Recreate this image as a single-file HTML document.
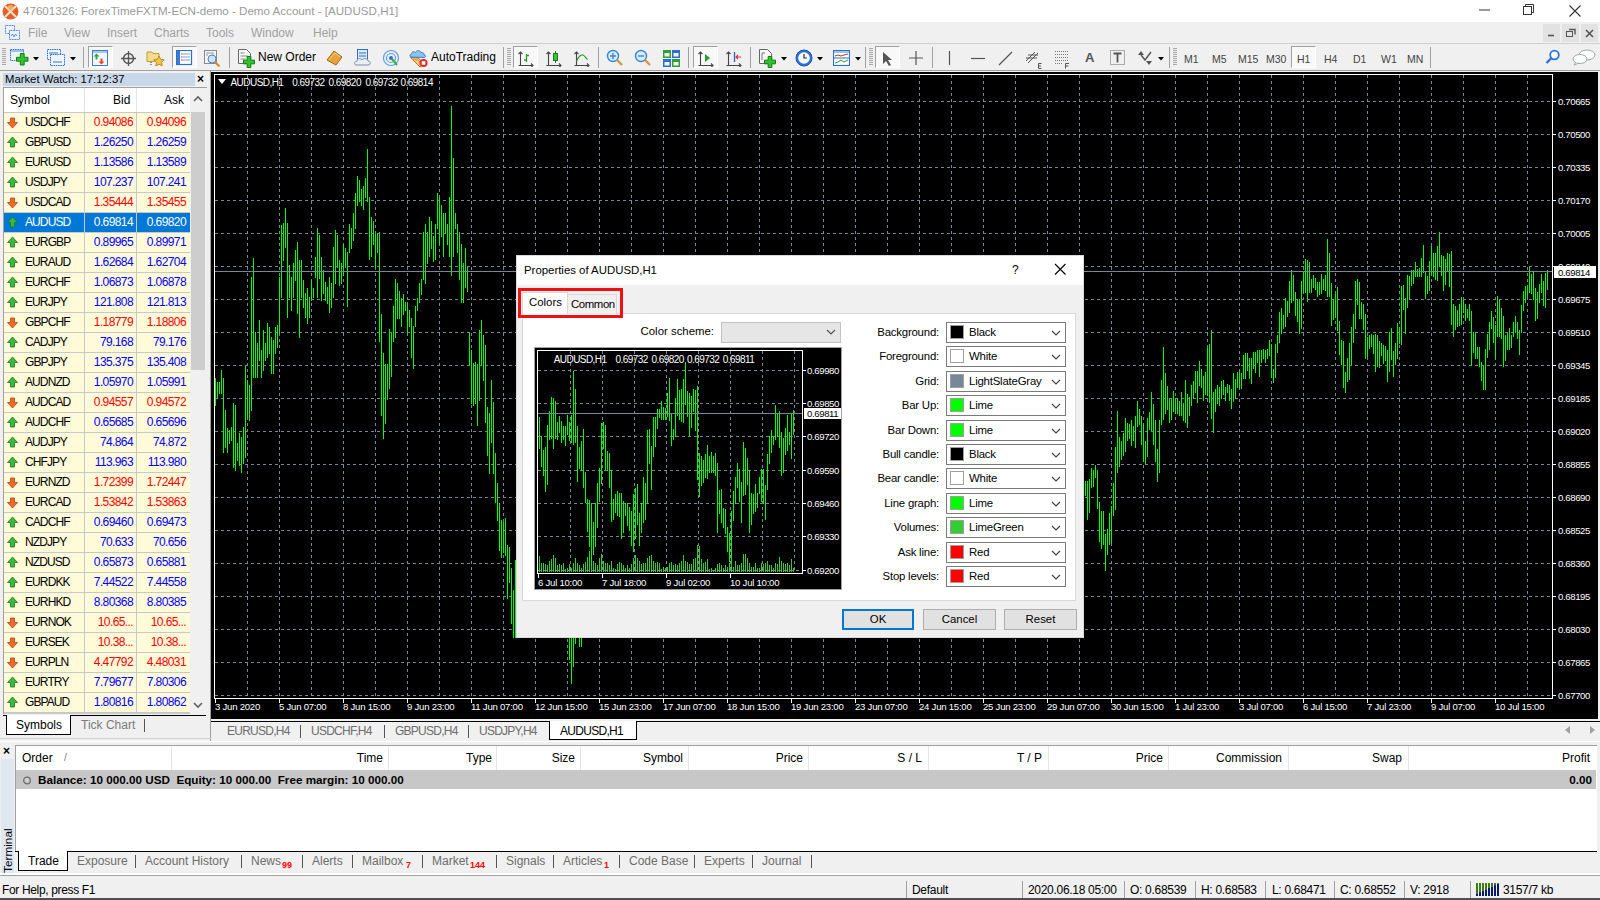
<!DOCTYPE html><html><head><meta charset='utf-8'><style>
*{margin:0;padding:0;box-sizing:border-box}
html,body{width:1600px;height:900px;overflow:hidden}
body{position:relative;background:#f0f0f0;font-family:"Liberation Sans",sans-serif;font-size:12px;color:#000}
.a{position:absolute}
.t{position:absolute;white-space:pre;line-height:1}
</style></head><body>
<div class='a' style='left:0;top:0;width:1600px;height:22px;background:#fff'></div>
<div class='t' style='left:23px;top:5px;font-size:11.6px;color:#9a9a9a'>47601326: ForexTimeFXTM-ECN-demo - Demo Account - [AUDUSD,H1]</div>
<div class='a' style='left:0;top:22px;width:1600px;height:21px;background:#f0f0f0'></div>
<div class='a' style='left:0;top:43px;width:1600px;height:1px;background:#cfcfcf'></div>
<div class='t' style='left:28px;top:27px;color:#a0a0a0'>File</div>
<div class='t' style='left:64px;top:27px;color:#a0a0a0'>View</div>
<div class='t' style='left:107px;top:27px;color:#a0a0a0'>Insert</div>
<div class='t' style='left:154px;top:27px;color:#a0a0a0'>Charts</div>
<div class='t' style='left:206px;top:27px;color:#a0a0a0'>Tools</div>
<div class='t' style='left:251px;top:27px;color:#a0a0a0'>Window</div>
<div class='t' style='left:313px;top:27px;color:#a0a0a0'>Help</div>
<div class='a' style='left:0;top:44px;width:1600px;height:26px;background:#f0f0f0'></div>
<div class='a' style='left:0;top:70px;width:1600px;height:1px;background:#a0a0a0'></div>
<div class='t' style='left:258px;top:51px'>New Order</div>
<div class='t' style='left:431px;top:51px'>AutoTrading</div>
<div class='a' style='left:0;top:71px;width:211px;height:667px;background:#f0f0f0'></div>
<div class='a' style='left:3px;top:73px;width:192px;height:13px;background:#c9d8e8'></div>
<div class='t' style='left:5px;top:74px;font-size:11.3px'>Market Watch: 17:12:37</div>
<div class='t' style='left:197px;top:73px;font-size:12px;font-weight:bold'>×</div>
<div class='a' style='left:3px;top:87px;width:204px;height:627px;background:#fff;border:1px solid #a0a0a0'></div>
<div class='a' style='left:4px;top:88px;width:186px;height:24px;background:#fff'></div>
<div class='t' style='left:10px;top:94px'>Symbol</div>
<div class='t' style='left:113px;top:94px'>Bid</div>
<div class='t' style='left:164px;top:94px'>Ask</div>
<div class='a' style='left:84px;top:88px;width:1px;height:24px;background:#e5e5e5'></div>
<div class='a' style='left:136px;top:88px;width:1px;height:24px;background:#e5e5e5'></div>
<div class='a' style='left:4px;top:112px;width:186px;height:602px;background:#c8c8c8'></div>
<div class='a' style='left:4px;top:113px;width:80px;height:19px;background:#fffad8'></div>
<div class='a' style='left:85px;top:113px;width:51px;height:19px;background:#fffad8'></div>
<div class='a' style='left:137px;top:113px;width:53px;height:19px;background:#fffad8'></div>
<svg class='a' style='left:7px;top:117px' width='12' height='12' viewBox='0 0 12 12'><path d='M3.5 1h4v4.5h3L5.5 11 .5 5.5h3z' fill='#f06a2a' stroke='#b8401a' stroke-width='.8'/></svg>
<div class='t' style='left:25px;top:116.2px;color:#000;letter-spacing:-0.9px'>USDCHF</div>
<div class='t' style='right:1467px;top:116.2px;color:#ff0000;letter-spacing:-0.6px'>0.94086</div>
<div class='t' style='right:1414px;top:116.2px;color:#ff0000;letter-spacing:-0.6px'>0.94096</div>
<div class='a' style='left:4px;top:133px;width:80px;height:19px;background:#fffad8'></div>
<div class='a' style='left:85px;top:133px;width:51px;height:19px;background:#fffad8'></div>
<div class='a' style='left:137px;top:133px;width:53px;height:19px;background:#fffad8'></div>
<svg class='a' style='left:7px;top:136px' width='12' height='12' viewBox='0 0 12 12'><path d='M5.5 1l5 5.5h-3V11h-4V6.5h-3z' fill='#3cb83c' stroke='#1c7a1c' stroke-width='.8'/></svg>
<div class='t' style='left:25px;top:136.2px;color:#000;letter-spacing:-0.9px'>GBPUSD</div>
<div class='t' style='right:1467px;top:136.2px;color:#0000ff;letter-spacing:-0.6px'>1.26250</div>
<div class='t' style='right:1414px;top:136.2px;color:#0000ff;letter-spacing:-0.6px'>1.26259</div>
<div class='a' style='left:4px;top:153px;width:80px;height:19px;background:#fffad8'></div>
<div class='a' style='left:85px;top:153px;width:51px;height:19px;background:#fffad8'></div>
<div class='a' style='left:137px;top:153px;width:53px;height:19px;background:#fffad8'></div>
<svg class='a' style='left:7px;top:156px' width='12' height='12' viewBox='0 0 12 12'><path d='M5.5 1l5 5.5h-3V11h-4V6.5h-3z' fill='#3cb83c' stroke='#1c7a1c' stroke-width='.8'/></svg>
<div class='t' style='left:25px;top:156.2px;color:#000;letter-spacing:-0.9px'>EURUSD</div>
<div class='t' style='right:1467px;top:156.2px;color:#0000ff;letter-spacing:-0.6px'>1.13586</div>
<div class='t' style='right:1414px;top:156.2px;color:#0000ff;letter-spacing:-0.6px'>1.13589</div>
<div class='a' style='left:4px;top:173px;width:80px;height:19px;background:#fffad8'></div>
<div class='a' style='left:85px;top:173px;width:51px;height:19px;background:#fffad8'></div>
<div class='a' style='left:137px;top:173px;width:53px;height:19px;background:#fffad8'></div>
<svg class='a' style='left:7px;top:176px' width='12' height='12' viewBox='0 0 12 12'><path d='M5.5 1l5 5.5h-3V11h-4V6.5h-3z' fill='#3cb83c' stroke='#1c7a1c' stroke-width='.8'/></svg>
<div class='t' style='left:25px;top:176.2px;color:#000;letter-spacing:-0.9px'>USDJPY</div>
<div class='t' style='right:1467px;top:176.2px;color:#0000ff;letter-spacing:-0.6px'>107.237</div>
<div class='t' style='right:1414px;top:176.2px;color:#0000ff;letter-spacing:-0.6px'>107.241</div>
<div class='a' style='left:4px;top:193px;width:80px;height:19px;background:#fffad8'></div>
<div class='a' style='left:85px;top:193px;width:51px;height:19px;background:#fffad8'></div>
<div class='a' style='left:137px;top:193px;width:53px;height:19px;background:#fffad8'></div>
<svg class='a' style='left:7px;top:197px' width='12' height='12' viewBox='0 0 12 12'><path d='M3.5 1h4v4.5h3L5.5 11 .5 5.5h3z' fill='#f06a2a' stroke='#b8401a' stroke-width='.8'/></svg>
<div class='t' style='left:25px;top:196.2px;color:#000;letter-spacing:-0.9px'>USDCAD</div>
<div class='t' style='right:1467px;top:196.2px;color:#ff0000;letter-spacing:-0.6px'>1.35444</div>
<div class='t' style='right:1414px;top:196.2px;color:#ff0000;letter-spacing:-0.6px'>1.35455</div>
<div class='a' style='left:4px;top:213px;width:80px;height:19px;background:#0078d7'></div>
<div class='a' style='left:85px;top:213px;width:51px;height:19px;background:#0078d7'></div>
<div class='a' style='left:137px;top:213px;width:53px;height:19px;background:#0078d7'></div>
<svg class='a' style='left:7px;top:216px' width='12' height='12' viewBox='0 0 12 12'><path d='M5.5 1l5 5.5h-3V11h-4V6.5h-3z' fill='#3cb83c' stroke='#1c7a1c' stroke-width='.8'/></svg>
<div class='t' style='left:25px;top:216.2px;color:#fff;letter-spacing:-0.9px'>AUDUSD</div>
<div class='t' style='right:1467px;top:216.2px;color:#fff;letter-spacing:-0.6px'>0.69814</div>
<div class='t' style='right:1414px;top:216.2px;color:#fff;letter-spacing:-0.6px'>0.69820</div>
<div class='a' style='left:4px;top:233px;width:80px;height:19px;background:#fffad8'></div>
<div class='a' style='left:85px;top:233px;width:51px;height:19px;background:#fffad8'></div>
<div class='a' style='left:137px;top:233px;width:53px;height:19px;background:#fffad8'></div>
<svg class='a' style='left:7px;top:236px' width='12' height='12' viewBox='0 0 12 12'><path d='M5.5 1l5 5.5h-3V11h-4V6.5h-3z' fill='#3cb83c' stroke='#1c7a1c' stroke-width='.8'/></svg>
<div class='t' style='left:25px;top:236.2px;color:#000;letter-spacing:-0.9px'>EURGBP</div>
<div class='t' style='right:1467px;top:236.2px;color:#0000ff;letter-spacing:-0.6px'>0.89965</div>
<div class='t' style='right:1414px;top:236.2px;color:#0000ff;letter-spacing:-0.6px'>0.89971</div>
<div class='a' style='left:4px;top:253px;width:80px;height:19px;background:#fffad8'></div>
<div class='a' style='left:85px;top:253px;width:51px;height:19px;background:#fffad8'></div>
<div class='a' style='left:137px;top:253px;width:53px;height:19px;background:#fffad8'></div>
<svg class='a' style='left:7px;top:256px' width='12' height='12' viewBox='0 0 12 12'><path d='M5.5 1l5 5.5h-3V11h-4V6.5h-3z' fill='#3cb83c' stroke='#1c7a1c' stroke-width='.8'/></svg>
<div class='t' style='left:25px;top:256.2px;color:#000;letter-spacing:-0.9px'>EURAUD</div>
<div class='t' style='right:1467px;top:256.2px;color:#0000ff;letter-spacing:-0.6px'>1.62684</div>
<div class='t' style='right:1414px;top:256.2px;color:#0000ff;letter-spacing:-0.6px'>1.62704</div>
<div class='a' style='left:4px;top:273px;width:80px;height:19px;background:#fffad8'></div>
<div class='a' style='left:85px;top:273px;width:51px;height:19px;background:#fffad8'></div>
<div class='a' style='left:137px;top:273px;width:53px;height:19px;background:#fffad8'></div>
<svg class='a' style='left:7px;top:276px' width='12' height='12' viewBox='0 0 12 12'><path d='M5.5 1l5 5.5h-3V11h-4V6.5h-3z' fill='#3cb83c' stroke='#1c7a1c' stroke-width='.8'/></svg>
<div class='t' style='left:25px;top:276.2px;color:#000;letter-spacing:-0.9px'>EURCHF</div>
<div class='t' style='right:1467px;top:276.2px;color:#0000ff;letter-spacing:-0.6px'>1.06873</div>
<div class='t' style='right:1414px;top:276.2px;color:#0000ff;letter-spacing:-0.6px'>1.06878</div>
<div class='a' style='left:4px;top:293px;width:80px;height:19px;background:#fffad8'></div>
<div class='a' style='left:85px;top:293px;width:51px;height:19px;background:#fffad8'></div>
<div class='a' style='left:137px;top:293px;width:53px;height:19px;background:#fffad8'></div>
<svg class='a' style='left:7px;top:296px' width='12' height='12' viewBox='0 0 12 12'><path d='M5.5 1l5 5.5h-3V11h-4V6.5h-3z' fill='#3cb83c' stroke='#1c7a1c' stroke-width='.8'/></svg>
<div class='t' style='left:25px;top:296.2px;color:#000;letter-spacing:-0.9px'>EURJPY</div>
<div class='t' style='right:1467px;top:296.2px;color:#0000ff;letter-spacing:-0.6px'>121.808</div>
<div class='t' style='right:1414px;top:296.2px;color:#0000ff;letter-spacing:-0.6px'>121.813</div>
<div class='a' style='left:4px;top:313px;width:80px;height:19px;background:#fffad8'></div>
<div class='a' style='left:85px;top:313px;width:51px;height:19px;background:#fffad8'></div>
<div class='a' style='left:137px;top:313px;width:53px;height:19px;background:#fffad8'></div>
<svg class='a' style='left:7px;top:317px' width='12' height='12' viewBox='0 0 12 12'><path d='M3.5 1h4v4.5h3L5.5 11 .5 5.5h3z' fill='#f06a2a' stroke='#b8401a' stroke-width='.8'/></svg>
<div class='t' style='left:25px;top:316.2px;color:#000;letter-spacing:-0.9px'>GBPCHF</div>
<div class='t' style='right:1467px;top:316.2px;color:#ff0000;letter-spacing:-0.6px'>1.18779</div>
<div class='t' style='right:1414px;top:316.2px;color:#ff0000;letter-spacing:-0.6px'>1.18806</div>
<div class='a' style='left:4px;top:333px;width:80px;height:19px;background:#fffad8'></div>
<div class='a' style='left:85px;top:333px;width:51px;height:19px;background:#fffad8'></div>
<div class='a' style='left:137px;top:333px;width:53px;height:19px;background:#fffad8'></div>
<svg class='a' style='left:7px;top:336px' width='12' height='12' viewBox='0 0 12 12'><path d='M5.5 1l5 5.5h-3V11h-4V6.5h-3z' fill='#3cb83c' stroke='#1c7a1c' stroke-width='.8'/></svg>
<div class='t' style='left:25px;top:336.2px;color:#000;letter-spacing:-0.9px'>CADJPY</div>
<div class='t' style='right:1467px;top:336.2px;color:#0000ff;letter-spacing:-0.6px'>79.168</div>
<div class='t' style='right:1414px;top:336.2px;color:#0000ff;letter-spacing:-0.6px'>79.176</div>
<div class='a' style='left:4px;top:353px;width:80px;height:19px;background:#fffad8'></div>
<div class='a' style='left:85px;top:353px;width:51px;height:19px;background:#fffad8'></div>
<div class='a' style='left:137px;top:353px;width:53px;height:19px;background:#fffad8'></div>
<svg class='a' style='left:7px;top:356px' width='12' height='12' viewBox='0 0 12 12'><path d='M5.5 1l5 5.5h-3V11h-4V6.5h-3z' fill='#3cb83c' stroke='#1c7a1c' stroke-width='.8'/></svg>
<div class='t' style='left:25px;top:356.2px;color:#000;letter-spacing:-0.9px'>GBPJPY</div>
<div class='t' style='right:1467px;top:356.2px;color:#0000ff;letter-spacing:-0.6px'>135.375</div>
<div class='t' style='right:1414px;top:356.2px;color:#0000ff;letter-spacing:-0.6px'>135.408</div>
<div class='a' style='left:4px;top:373px;width:80px;height:19px;background:#fffad8'></div>
<div class='a' style='left:85px;top:373px;width:51px;height:19px;background:#fffad8'></div>
<div class='a' style='left:137px;top:373px;width:53px;height:19px;background:#fffad8'></div>
<svg class='a' style='left:7px;top:376px' width='12' height='12' viewBox='0 0 12 12'><path d='M5.5 1l5 5.5h-3V11h-4V6.5h-3z' fill='#3cb83c' stroke='#1c7a1c' stroke-width='.8'/></svg>
<div class='t' style='left:25px;top:376.2px;color:#000;letter-spacing:-0.9px'>AUDNZD</div>
<div class='t' style='right:1467px;top:376.2px;color:#0000ff;letter-spacing:-0.6px'>1.05970</div>
<div class='t' style='right:1414px;top:376.2px;color:#0000ff;letter-spacing:-0.6px'>1.05991</div>
<div class='a' style='left:4px;top:393px;width:80px;height:19px;background:#fffad8'></div>
<div class='a' style='left:85px;top:393px;width:51px;height:19px;background:#fffad8'></div>
<div class='a' style='left:137px;top:393px;width:53px;height:19px;background:#fffad8'></div>
<svg class='a' style='left:7px;top:397px' width='12' height='12' viewBox='0 0 12 12'><path d='M3.5 1h4v4.5h3L5.5 11 .5 5.5h3z' fill='#f06a2a' stroke='#b8401a' stroke-width='.8'/></svg>
<div class='t' style='left:25px;top:396.2px;color:#000;letter-spacing:-0.9px'>AUDCAD</div>
<div class='t' style='right:1467px;top:396.2px;color:#ff0000;letter-spacing:-0.6px'>0.94557</div>
<div class='t' style='right:1414px;top:396.2px;color:#ff0000;letter-spacing:-0.6px'>0.94572</div>
<div class='a' style='left:4px;top:413px;width:80px;height:19px;background:#fffad8'></div>
<div class='a' style='left:85px;top:413px;width:51px;height:19px;background:#fffad8'></div>
<div class='a' style='left:137px;top:413px;width:53px;height:19px;background:#fffad8'></div>
<svg class='a' style='left:7px;top:416px' width='12' height='12' viewBox='0 0 12 12'><path d='M5.5 1l5 5.5h-3V11h-4V6.5h-3z' fill='#3cb83c' stroke='#1c7a1c' stroke-width='.8'/></svg>
<div class='t' style='left:25px;top:416.2px;color:#000;letter-spacing:-0.9px'>AUDCHF</div>
<div class='t' style='right:1467px;top:416.2px;color:#0000ff;letter-spacing:-0.6px'>0.65685</div>
<div class='t' style='right:1414px;top:416.2px;color:#0000ff;letter-spacing:-0.6px'>0.65696</div>
<div class='a' style='left:4px;top:433px;width:80px;height:19px;background:#fffad8'></div>
<div class='a' style='left:85px;top:433px;width:51px;height:19px;background:#fffad8'></div>
<div class='a' style='left:137px;top:433px;width:53px;height:19px;background:#fffad8'></div>
<svg class='a' style='left:7px;top:436px' width='12' height='12' viewBox='0 0 12 12'><path d='M5.5 1l5 5.5h-3V11h-4V6.5h-3z' fill='#3cb83c' stroke='#1c7a1c' stroke-width='.8'/></svg>
<div class='t' style='left:25px;top:436.2px;color:#000;letter-spacing:-0.9px'>AUDJPY</div>
<div class='t' style='right:1467px;top:436.2px;color:#0000ff;letter-spacing:-0.6px'>74.864</div>
<div class='t' style='right:1414px;top:436.2px;color:#0000ff;letter-spacing:-0.6px'>74.872</div>
<div class='a' style='left:4px;top:453px;width:80px;height:19px;background:#fffad8'></div>
<div class='a' style='left:85px;top:453px;width:51px;height:19px;background:#fffad8'></div>
<div class='a' style='left:137px;top:453px;width:53px;height:19px;background:#fffad8'></div>
<svg class='a' style='left:7px;top:456px' width='12' height='12' viewBox='0 0 12 12'><path d='M5.5 1l5 5.5h-3V11h-4V6.5h-3z' fill='#3cb83c' stroke='#1c7a1c' stroke-width='.8'/></svg>
<div class='t' style='left:25px;top:456.2px;color:#000;letter-spacing:-0.9px'>CHFJPY</div>
<div class='t' style='right:1467px;top:456.2px;color:#0000ff;letter-spacing:-0.6px'>113.963</div>
<div class='t' style='right:1414px;top:456.2px;color:#0000ff;letter-spacing:-0.6px'>113.980</div>
<div class='a' style='left:4px;top:473px;width:80px;height:19px;background:#fffad8'></div>
<div class='a' style='left:85px;top:473px;width:51px;height:19px;background:#fffad8'></div>
<div class='a' style='left:137px;top:473px;width:53px;height:19px;background:#fffad8'></div>
<svg class='a' style='left:7px;top:477px' width='12' height='12' viewBox='0 0 12 12'><path d='M3.5 1h4v4.5h3L5.5 11 .5 5.5h3z' fill='#f06a2a' stroke='#b8401a' stroke-width='.8'/></svg>
<div class='t' style='left:25px;top:476.2px;color:#000;letter-spacing:-0.9px'>EURNZD</div>
<div class='t' style='right:1467px;top:476.2px;color:#ff0000;letter-spacing:-0.6px'>1.72399</div>
<div class='t' style='right:1414px;top:476.2px;color:#ff0000;letter-spacing:-0.6px'>1.72447</div>
<div class='a' style='left:4px;top:493px;width:80px;height:19px;background:#fffad8'></div>
<div class='a' style='left:85px;top:493px;width:51px;height:19px;background:#fffad8'></div>
<div class='a' style='left:137px;top:493px;width:53px;height:19px;background:#fffad8'></div>
<svg class='a' style='left:7px;top:497px' width='12' height='12' viewBox='0 0 12 12'><path d='M3.5 1h4v4.5h3L5.5 11 .5 5.5h3z' fill='#f06a2a' stroke='#b8401a' stroke-width='.8'/></svg>
<div class='t' style='left:25px;top:496.2px;color:#000;letter-spacing:-0.9px'>EURCAD</div>
<div class='t' style='right:1467px;top:496.2px;color:#ff0000;letter-spacing:-0.6px'>1.53842</div>
<div class='t' style='right:1414px;top:496.2px;color:#ff0000;letter-spacing:-0.6px'>1.53863</div>
<div class='a' style='left:4px;top:513px;width:80px;height:19px;background:#fffad8'></div>
<div class='a' style='left:85px;top:513px;width:51px;height:19px;background:#fffad8'></div>
<div class='a' style='left:137px;top:513px;width:53px;height:19px;background:#fffad8'></div>
<svg class='a' style='left:7px;top:516px' width='12' height='12' viewBox='0 0 12 12'><path d='M5.5 1l5 5.5h-3V11h-4V6.5h-3z' fill='#3cb83c' stroke='#1c7a1c' stroke-width='.8'/></svg>
<div class='t' style='left:25px;top:516.2px;color:#000;letter-spacing:-0.9px'>CADCHF</div>
<div class='t' style='right:1467px;top:516.2px;color:#0000ff;letter-spacing:-0.6px'>0.69460</div>
<div class='t' style='right:1414px;top:516.2px;color:#0000ff;letter-spacing:-0.6px'>0.69473</div>
<div class='a' style='left:4px;top:533px;width:80px;height:19px;background:#fffad8'></div>
<div class='a' style='left:85px;top:533px;width:51px;height:19px;background:#fffad8'></div>
<div class='a' style='left:137px;top:533px;width:53px;height:19px;background:#fffad8'></div>
<svg class='a' style='left:7px;top:536px' width='12' height='12' viewBox='0 0 12 12'><path d='M5.5 1l5 5.5h-3V11h-4V6.5h-3z' fill='#3cb83c' stroke='#1c7a1c' stroke-width='.8'/></svg>
<div class='t' style='left:25px;top:536.2px;color:#000;letter-spacing:-0.9px'>NZDJPY</div>
<div class='t' style='right:1467px;top:536.2px;color:#0000ff;letter-spacing:-0.6px'>70.633</div>
<div class='t' style='right:1414px;top:536.2px;color:#0000ff;letter-spacing:-0.6px'>70.656</div>
<div class='a' style='left:4px;top:553px;width:80px;height:19px;background:#fffad8'></div>
<div class='a' style='left:85px;top:553px;width:51px;height:19px;background:#fffad8'></div>
<div class='a' style='left:137px;top:553px;width:53px;height:19px;background:#fffad8'></div>
<svg class='a' style='left:7px;top:556px' width='12' height='12' viewBox='0 0 12 12'><path d='M5.5 1l5 5.5h-3V11h-4V6.5h-3z' fill='#3cb83c' stroke='#1c7a1c' stroke-width='.8'/></svg>
<div class='t' style='left:25px;top:556.2px;color:#000;letter-spacing:-0.9px'>NZDUSD</div>
<div class='t' style='right:1467px;top:556.2px;color:#0000ff;letter-spacing:-0.6px'>0.65873</div>
<div class='t' style='right:1414px;top:556.2px;color:#0000ff;letter-spacing:-0.6px'>0.65881</div>
<div class='a' style='left:4px;top:573px;width:80px;height:19px;background:#fffad8'></div>
<div class='a' style='left:85px;top:573px;width:51px;height:19px;background:#fffad8'></div>
<div class='a' style='left:137px;top:573px;width:53px;height:19px;background:#fffad8'></div>
<svg class='a' style='left:7px;top:576px' width='12' height='12' viewBox='0 0 12 12'><path d='M5.5 1l5 5.5h-3V11h-4V6.5h-3z' fill='#3cb83c' stroke='#1c7a1c' stroke-width='.8'/></svg>
<div class='t' style='left:25px;top:576.2px;color:#000;letter-spacing:-0.9px'>EURDKK</div>
<div class='t' style='right:1467px;top:576.2px;color:#0000ff;letter-spacing:-0.6px'>7.44522</div>
<div class='t' style='right:1414px;top:576.2px;color:#0000ff;letter-spacing:-0.6px'>7.44558</div>
<div class='a' style='left:4px;top:593px;width:80px;height:19px;background:#fffad8'></div>
<div class='a' style='left:85px;top:593px;width:51px;height:19px;background:#fffad8'></div>
<div class='a' style='left:137px;top:593px;width:53px;height:19px;background:#fffad8'></div>
<svg class='a' style='left:7px;top:596px' width='12' height='12' viewBox='0 0 12 12'><path d='M5.5 1l5 5.5h-3V11h-4V6.5h-3z' fill='#3cb83c' stroke='#1c7a1c' stroke-width='.8'/></svg>
<div class='t' style='left:25px;top:596.2px;color:#000;letter-spacing:-0.9px'>EURHKD</div>
<div class='t' style='right:1467px;top:596.2px;color:#0000ff;letter-spacing:-0.6px'>8.80368</div>
<div class='t' style='right:1414px;top:596.2px;color:#0000ff;letter-spacing:-0.6px'>8.80385</div>
<div class='a' style='left:4px;top:613px;width:80px;height:19px;background:#fffad8'></div>
<div class='a' style='left:85px;top:613px;width:51px;height:19px;background:#fffad8'></div>
<div class='a' style='left:137px;top:613px;width:53px;height:19px;background:#fffad8'></div>
<svg class='a' style='left:7px;top:617px' width='12' height='12' viewBox='0 0 12 12'><path d='M3.5 1h4v4.5h3L5.5 11 .5 5.5h3z' fill='#f06a2a' stroke='#b8401a' stroke-width='.8'/></svg>
<div class='t' style='left:25px;top:616.2px;color:#000;letter-spacing:-0.9px'>EURNOK</div>
<div class='t' style='right:1467px;top:616.2px;color:#ff0000;letter-spacing:-0.6px'>10.65...</div>
<div class='t' style='right:1414px;top:616.2px;color:#ff0000;letter-spacing:-0.6px'>10.65...</div>
<div class='a' style='left:4px;top:633px;width:80px;height:19px;background:#fffad8'></div>
<div class='a' style='left:85px;top:633px;width:51px;height:19px;background:#fffad8'></div>
<div class='a' style='left:137px;top:633px;width:53px;height:19px;background:#fffad8'></div>
<svg class='a' style='left:7px;top:637px' width='12' height='12' viewBox='0 0 12 12'><path d='M3.5 1h4v4.5h3L5.5 11 .5 5.5h3z' fill='#f06a2a' stroke='#b8401a' stroke-width='.8'/></svg>
<div class='t' style='left:25px;top:636.2px;color:#000;letter-spacing:-0.9px'>EURSEK</div>
<div class='t' style='right:1467px;top:636.2px;color:#ff0000;letter-spacing:-0.6px'>10.38...</div>
<div class='t' style='right:1414px;top:636.2px;color:#ff0000;letter-spacing:-0.6px'>10.38...</div>
<div class='a' style='left:4px;top:653px;width:80px;height:19px;background:#fffad8'></div>
<div class='a' style='left:85px;top:653px;width:51px;height:19px;background:#fffad8'></div>
<div class='a' style='left:137px;top:653px;width:53px;height:19px;background:#fffad8'></div>
<svg class='a' style='left:7px;top:657px' width='12' height='12' viewBox='0 0 12 12'><path d='M3.5 1h4v4.5h3L5.5 11 .5 5.5h3z' fill='#f06a2a' stroke='#b8401a' stroke-width='.8'/></svg>
<div class='t' style='left:25px;top:656.2px;color:#000;letter-spacing:-0.9px'>EURPLN</div>
<div class='t' style='right:1467px;top:656.2px;color:#ff0000;letter-spacing:-0.6px'>4.47792</div>
<div class='t' style='right:1414px;top:656.2px;color:#ff0000;letter-spacing:-0.6px'>4.48031</div>
<div class='a' style='left:4px;top:673px;width:80px;height:19px;background:#fffad8'></div>
<div class='a' style='left:85px;top:673px;width:51px;height:19px;background:#fffad8'></div>
<div class='a' style='left:137px;top:673px;width:53px;height:19px;background:#fffad8'></div>
<svg class='a' style='left:7px;top:676px' width='12' height='12' viewBox='0 0 12 12'><path d='M5.5 1l5 5.5h-3V11h-4V6.5h-3z' fill='#3cb83c' stroke='#1c7a1c' stroke-width='.8'/></svg>
<div class='t' style='left:25px;top:676.2px;color:#000;letter-spacing:-0.9px'>EURTRY</div>
<div class='t' style='right:1467px;top:676.2px;color:#0000ff;letter-spacing:-0.6px'>7.79677</div>
<div class='t' style='right:1414px;top:676.2px;color:#0000ff;letter-spacing:-0.6px'>7.80306</div>
<div class='a' style='left:4px;top:693px;width:80px;height:19px;background:#fffad8'></div>
<div class='a' style='left:85px;top:693px;width:51px;height:19px;background:#fffad8'></div>
<div class='a' style='left:137px;top:693px;width:53px;height:19px;background:#fffad8'></div>
<svg class='a' style='left:7px;top:696px' width='12' height='12' viewBox='0 0 12 12'><path d='M5.5 1l5 5.5h-3V11h-4V6.5h-3z' fill='#3cb83c' stroke='#1c7a1c' stroke-width='.8'/></svg>
<div class='t' style='left:25px;top:696.2px;color:#000;letter-spacing:-0.9px'>GBPAUD</div>
<div class='t' style='right:1467px;top:696.2px;color:#0000ff;letter-spacing:-0.6px'>1.80816</div>
<div class='t' style='right:1414px;top:696.2px;color:#0000ff;letter-spacing:-0.6px'>1.80862</div>
<div class='a' style='left:190px;top:88px;width:17px;height:626px;background:#f0f0f0'></div>
<div class='a' style='left:191px;top:112px;width:14px;height:258px;background:#cdcdcd'></div>
<svg class='a' style='left:192px;top:94px' width='12' height='10'><path d='M2 7l4-4 4 4' fill='none' stroke='#606060' stroke-width='1.6'/></svg>
<svg class='a' style='left:192px;top:700px' width='12' height='10'><path d='M2 3l4 4 4-4' fill='none' stroke='#606060' stroke-width='1.6'/></svg>
<div class='a' style='left:3px;top:715px;width:203px;height:1px;background:#000'></div>
<div class='a' style='left:6px;top:715px;width:65px;height:20px;background:#fff;border:1px solid #000;border-top:none'></div>
<div class='t' style='left:16px;top:719px'>Symbols</div>
<div class='t' style='left:81px;top:719px;color:#7a7a7a'>Tick Chart</div>
<div class='a' style='left:144px;top:719px;width:1px;height:13px;background:#555'></div>
<svg class='a' style='left:211px;top:72px' width='1387' height='647' viewBox='211 72 1387 647' shape-rendering='crispEdges'>
<rect x='211' y='72' width='1387' height='647' fill='#000'/>
<path d='M247.5 75V698M279.5 75V698M311.5 75V698M343.5 75V698M375.5 75V698M407.5 75V698M439.5 75V698M471.5 75V698M503.5 75V698M535.5 75V698M567.5 75V698M599.5 75V698M631.5 75V698M663.5 75V698M695.5 75V698M727.5 75V698M759.5 75V698M791.5 75V698M823.5 75V698M855.5 75V698M887.5 75V698M919.5 75V698M951.5 75V698M983.5 75V698M1015.5 75V698M1047.5 75V698M1079.5 75V698M1111.5 75V698M1143.5 75V698M1175.5 75V698M1207.5 75V698M1239.5 75V698M1271.5 75V698M1303.5 75V698M1335.5 75V698M1367.5 75V698M1399.5 75V698M1431.5 75V698M1463.5 75V698M1495.5 75V698M1527.5 75V698M215 101.5H1552M215 134.5H1552M215 167.5H1552M215 200.5H1552M215 233.5H1552M215 266.5H1552M215 299.5H1552M215 332.5H1552M215 365.5H1552M215 398.5H1552M215 431.5H1552M215 464.5H1552M215 497.5H1552M215 530.5H1552M215 563.5H1552M215 596.5H1552M215 629.5H1552M215 662.5H1552M215 695.5H1552' stroke='#778899' stroke-dasharray='3 3' fill='none'/>
<path d='M215.5 378V406M217.5 382V398M219.5 382V394M221.5 370V394M223.5 378V453M225.5 410V448M227.5 428V453M229.5 430V444M231.5 427V441M233.5 403V468M235.5 405V471M237.5 443V461M239.5 433V466M241.5 437V473M243.5 427V464M245.5 365V458M247.5 380V419M249.5 385V421M251.5 277V411M253.5 258V378M255.5 332V378M257.5 343V378M259.5 320V361M261.5 350V378M263.5 330V371M265.5 343V361M267.5 323V358M269.5 327V354M271.5 337V374M273.5 340V374M275.5 327V354M277.5 325V348M279.5 277V334M281.5 225V298M283.5 223V261M285.5 208V248M287.5 223V318M289.5 265V298M291.5 277V311M293.5 263V298M295.5 250V281M297.5 242V314M299.5 260V338M301.5 260V298M303.5 280V308M305.5 293V318M307.5 288V324M309.5 297V318M311.5 280V301M313.5 288V298M315.5 257V278M317.5 228V298M319.5 235V279M321.5 257V301M323.5 270V294M325.5 282V301M327.5 287V304M329.5 277V313M331.5 283V308M333.5 247V298M335.5 230V284M337.5 235V268M339.5 260V286M341.5 263V284M343.5 244V276M345.5 248V268M347.5 252V307M349.5 224V253M351.5 228V249M353.5 213V241M355.5 193V229M357.5 176V206M359.5 180V202M361.5 189V206M363.5 186V210M365.5 178V198M367.5 149V202M369.5 197V260M371.5 217V257M373.5 221V245M375.5 234V268M377.5 234V253M379.5 232V342M381.5 314V416M383.5 353V439M385.5 364V424M387.5 364V400M389.5 329V389M391.5 333V377M393.5 306V342M395.5 279V338M397.5 283V319M399.5 291V319M401.5 298V327M403.5 294V315M405.5 302V311M407.5 302V334M409.5 310V327M411.5 318V358M413.5 326V369M415.5 306V327M417.5 298V311M419.5 283V303M421.5 279V295M423.5 232V280M425.5 224V284M427.5 232V264M429.5 217V257M431.5 221V249M433.5 236V262M435.5 224V260M437.5 193V229M439.5 197V245M441.5 205V237M443.5 213V257M445.5 213V233M447.5 224V245M449.5 197V257M451.5 106V276M453.5 158V257M455.5 213V229M457.5 224V253M459.5 232V280M461.5 244V303M463.5 263V303M465.5 248V288M467.5 267V292M469.5 333V365M471.5 350V404M473.5 363V406M475.5 362V404M477.5 364V426M479.5 330V401M481.5 320V366M483.5 335V381M485.5 345V423M487.5 407V456M489.5 413V474M491.5 380V443M493.5 402V474M495.5 453V503M497.5 483V521M499.5 503V551M501.5 520V558M503.5 522V553M505.5 518V556M507.5 545V599M509.5 547V583M511.5 568V624M513.5 590V638M515.5 560V638M1085.5 481V496M1087.5 481V520M1089.5 479V513M1091.5 468V488M1093.5 470V487M1095.5 465V478M1097.5 470V509M1099.5 502V542M1101.5 511V549M1103.5 511V545M1105.5 534V571M1107.5 529V555M1109.5 513V545M1111.5 506V543M1113.5 483V516M1115.5 447V510M1117.5 411V473M1119.5 437V467M1121.5 441V460M1123.5 433V456M1125.5 418V452M1127.5 423V441M1129.5 424V439M1131.5 420V446M1133.5 426V441M1135.5 416V448M1137.5 401V427M1139.5 409V425M1141.5 416V445M1143.5 424V462M1145.5 441V464M1147.5 418V457M1149.5 412V430M1151.5 392V431M1153.5 404V445M1155.5 420V462M1157.5 449V482M1159.5 420V473M1161.5 380V425M1163.5 347V420M1165.5 373V414M1167.5 386V410M1169.5 398V423M1171.5 399V420M1173.5 391V412M1175.5 398V414M1177.5 398V414M1179.5 401V416M1181.5 392V416M1183.5 403V421M1185.5 380V423M1187.5 394V428M1189.5 397V416M1191.5 385V406M1193.5 381V398M1195.5 371V393M1197.5 371V403M1199.5 361V386M1201.5 369V388M1203.5 376V401M1205.5 372V395M1207.5 348V396M1209.5 344V403M1211.5 330V419M1213.5 392V433M1215.5 389V412M1217.5 385V404M1219.5 387V406M1221.5 381V399M1223.5 380V395M1225.5 387V401M1227.5 384V393M1229.5 385V401M1231.5 389V409M1233.5 373V402M1235.5 379V399M1237.5 372V388M1239.5 372V389M1241.5 373V389M1243.5 355V379M1245.5 353V379M1247.5 353V371M1249.5 358V379M1251.5 358V384M1253.5 352V369M1255.5 352V373M1257.5 350V363M1259.5 350V377M1261.5 350V363M1263.5 349V359M1265.5 350V363M1267.5 349V359M1269.5 340V356M1271.5 344V378M1273.5 369V383M1275.5 344V378M1277.5 335V353M1279.5 312V343M1281.5 308V334M1283.5 315V329M1285.5 298V327M1287.5 301V317M1289.5 281V313M1291.5 270V303M1293.5 275V301M1295.5 292V316M1297.5 300V322M1299.5 299V334M1301.5 281V329M1303.5 271V293M1305.5 259V293M1307.5 260V302M1309.5 262V293M1311.5 279V293M1313.5 275V288M1315.5 278V290M1317.5 282V297M1319.5 282V295M1321.5 274V294M1323.5 279V290M1325.5 275V291M1327.5 239V297M1329.5 253V297M1331.5 283V326M1333.5 299V320M1335.5 294V318M1337.5 287V331M1339.5 321V355M1341.5 340V365M1343.5 341V388M1345.5 372V393M1347.5 358V382M1349.5 343V380M1351.5 327V365M1353.5 314V343M1355.5 281V329M1357.5 279V305M1359.5 282V319M1361.5 302V319M1363.5 304V330M1365.5 314V359M1367.5 337V357M1369.5 335V349M1371.5 334V347M1373.5 335V354M1375.5 334V372M1377.5 335V367M1379.5 341V368M1381.5 343V356M1383.5 345V364M1385.5 346V361M1387.5 350V382M1389.5 332V372M1391.5 328V360M1393.5 351V377M1395.5 343V365M1397.5 323V359M1399.5 327V344M1401.5 286V345M1403.5 285V310M1405.5 298V334M1407.5 275V308M1409.5 276V300M1411.5 270V286M1413.5 270V284M1415.5 262V277M1417.5 269V277M1419.5 268V277M1421.5 258V277M1423.5 245V273M1425.5 271V299M1427.5 276V294M1429.5 261V291M1431.5 246V275M1433.5 253V277M1435.5 253V280M1437.5 246V281M1439.5 232V267M1441.5 255V276M1443.5 256V291M1445.5 259V285M1447.5 253V272M1449.5 254V287M1451.5 251V325M1453.5 304V337M1455.5 306V330M1457.5 310V327M1459.5 304V326M1461.5 297V325M1463.5 300V313M1465.5 304V321M1467.5 309V318M1469.5 304V321M1471.5 311V366M1473.5 332V353M1475.5 332V359M1477.5 347V359M1479.5 347V367M1481.5 362V381M1483.5 365V390M1485.5 349V390M1487.5 334V358M1489.5 322V350M1491.5 311V329M1493.5 317V343M1495.5 325V359M1497.5 296V337M1499.5 300V337M1501.5 308V339M1503.5 316V367M1505.5 335V361M1507.5 333V350M1509.5 328V350M1511.5 335V348M1513.5 322V337M1515.5 316V333M1517.5 322V339M1519.5 330V355M1521.5 305V333M1523.5 291V311M1525.5 286V303M1527.5 285V299M1529.5 267V293M1531.5 274V294M1533.5 272V300M1535.5 288V321M1537.5 292V319M1539.5 284V303M1541.5 274V293M1543.5 281V306M1545.5 273V308M1547.5 270V290' stroke='#00ff00' stroke-width='1' fill='none'/>
<path d='M569.5 636V660M571.5 636V684M573.5 636V667M575.5 636V644M579.5 636V647M581.5 636V647' stroke='#00ff00'/>
<path d='M215 271.5H1552' stroke='#778899'/>
<rect x='214.5' y='74.5' width='1338' height='624' fill='none' stroke='#fff'/>
<path d='M1552 101.5H1556M1552 134.5H1556M1552 167.5H1556M1552 200.5H1556M1552 233.5H1556M1552 266.5H1556M1552 299.5H1556M1552 332.5H1556M1552 365.5H1556M1552 398.5H1556M1552 431.5H1556M1552 464.5H1556M1552 497.5H1556M1552 530.5H1556M1552 563.5H1556M1552 596.5H1556M1552 629.5H1556M1552 662.5H1556M1552 695.5H1556M215.5 698V703M279.5 698V703M343.5 698V703M407.5 698V703M471.5 698V703M535.5 698V703M599.5 698V703M663.5 698V703M727.5 698V703M791.5 698V703M855.5 698V703M919.5 698V703M983.5 698V703M1047.5 698V703M1111.5 698V703M1175.5 698V703M1239.5 698V703M1303.5 698V703M1367.5 698V703M1431.5 698V703M1495.5 698V703' stroke='#fff'/>
</svg>
<div class='t' style='left:1558px;top:97.4px;font-size:9.6px;color:#fff;letter-spacing:-0.38px'>0.70665</div>
<div class='t' style='left:1558px;top:130.4px;font-size:9.6px;color:#fff;letter-spacing:-0.38px'>0.70500</div>
<div class='t' style='left:1558px;top:163.4px;font-size:9.6px;color:#fff;letter-spacing:-0.38px'>0.70335</div>
<div class='t' style='left:1558px;top:196.4px;font-size:9.6px;color:#fff;letter-spacing:-0.38px'>0.70170</div>
<div class='t' style='left:1558px;top:229.4px;font-size:9.6px;color:#fff;letter-spacing:-0.38px'>0.70005</div>
<div class='t' style='left:1558px;top:262.4px;font-size:9.6px;color:#fff;letter-spacing:-0.38px'>0.69840</div>
<div class='t' style='left:1558px;top:295.4px;font-size:9.6px;color:#fff;letter-spacing:-0.38px'>0.69675</div>
<div class='t' style='left:1558px;top:328.4px;font-size:9.6px;color:#fff;letter-spacing:-0.38px'>0.69510</div>
<div class='t' style='left:1558px;top:361.4px;font-size:9.6px;color:#fff;letter-spacing:-0.38px'>0.69345</div>
<div class='t' style='left:1558px;top:394.4px;font-size:9.6px;color:#fff;letter-spacing:-0.38px'>0.69185</div>
<div class='t' style='left:1558px;top:427.4px;font-size:9.6px;color:#fff;letter-spacing:-0.38px'>0.69020</div>
<div class='t' style='left:1558px;top:460.4px;font-size:9.6px;color:#fff;letter-spacing:-0.38px'>0.68855</div>
<div class='t' style='left:1558px;top:493.4px;font-size:9.6px;color:#fff;letter-spacing:-0.38px'>0.68690</div>
<div class='t' style='left:1558px;top:526.4px;font-size:9.6px;color:#fff;letter-spacing:-0.38px'>0.68525</div>
<div class='t' style='left:1558px;top:559.4px;font-size:9.6px;color:#fff;letter-spacing:-0.38px'>0.68360</div>
<div class='t' style='left:1558px;top:592.4px;font-size:9.6px;color:#fff;letter-spacing:-0.38px'>0.68195</div>
<div class='t' style='left:1558px;top:625.4px;font-size:9.6px;color:#fff;letter-spacing:-0.38px'>0.68030</div>
<div class='t' style='left:1558px;top:658.4px;font-size:9.6px;color:#fff;letter-spacing:-0.38px'>0.67865</div>
<div class='t' style='left:1558px;top:691.4px;font-size:9.6px;color:#fff;letter-spacing:-0.38px'>0.67700</div>
<div class='a' style='left:1554px;top:266px;width:42px;height:12px;background:#fff'></div>
<div class='t' style='left:1558px;top:268.4px;font-size:9.6px;color:#000;letter-spacing:-0.38px'>0.69814</div>
<div class='t' style='left:215px;top:702.2px;font-size:9.6px;color:#fff;letter-spacing:-0.25px'>3 Jun 2020</div>
<div class='t' style='left:279px;top:702.2px;font-size:9.6px;color:#fff;letter-spacing:-0.25px'>5 Jun 07:00</div>
<div class='t' style='left:343px;top:702.2px;font-size:9.6px;color:#fff;letter-spacing:-0.25px'>8 Jun 15:00</div>
<div class='t' style='left:407px;top:702.2px;font-size:9.6px;color:#fff;letter-spacing:-0.25px'>9 Jun 23:00</div>
<div class='t' style='left:471px;top:702.2px;font-size:9.6px;color:#fff;letter-spacing:-0.25px'>11 Jun 07:00</div>
<div class='t' style='left:535px;top:702.2px;font-size:9.6px;color:#fff;letter-spacing:-0.25px'>12 Jun 15:00</div>
<div class='t' style='left:599px;top:702.2px;font-size:9.6px;color:#fff;letter-spacing:-0.25px'>15 Jun 23:00</div>
<div class='t' style='left:663px;top:702.2px;font-size:9.6px;color:#fff;letter-spacing:-0.25px'>17 Jun 07:00</div>
<div class='t' style='left:727px;top:702.2px;font-size:9.6px;color:#fff;letter-spacing:-0.25px'>18 Jun 15:00</div>
<div class='t' style='left:791px;top:702.2px;font-size:9.6px;color:#fff;letter-spacing:-0.25px'>19 Jun 23:00</div>
<div class='t' style='left:855px;top:702.2px;font-size:9.6px;color:#fff;letter-spacing:-0.25px'>23 Jun 07:00</div>
<div class='t' style='left:919px;top:702.2px;font-size:9.6px;color:#fff;letter-spacing:-0.25px'>24 Jun 15:00</div>
<div class='t' style='left:983px;top:702.2px;font-size:9.6px;color:#fff;letter-spacing:-0.25px'>25 Jun 23:00</div>
<div class='t' style='left:1047px;top:702.2px;font-size:9.6px;color:#fff;letter-spacing:-0.25px'>29 Jun 07:00</div>
<div class='t' style='left:1111px;top:702.2px;font-size:9.6px;color:#fff;letter-spacing:-0.25px'>30 Jun 15:00</div>
<div class='t' style='left:1175px;top:702.2px;font-size:9.6px;color:#fff;letter-spacing:-0.25px'>1 Jul 23:00</div>
<div class='t' style='left:1239px;top:702.2px;font-size:9.6px;color:#fff;letter-spacing:-0.25px'>3 Jul 07:00</div>
<div class='t' style='left:1303px;top:702.2px;font-size:9.6px;color:#fff;letter-spacing:-0.25px'>6 Jul 15:00</div>
<div class='t' style='left:1367px;top:702.2px;font-size:9.6px;color:#fff;letter-spacing:-0.25px'>7 Jul 23:00</div>
<div class='t' style='left:1431px;top:702.2px;font-size:9.6px;color:#fff;letter-spacing:-0.25px'>9 Jul 07:00</div>
<div class='t' style='left:1495px;top:702.2px;font-size:9.6px;color:#fff;letter-spacing:-0.25px'>10 Jul 15:00</div>
<svg class='a' style='left:218px;top:79px' width='9' height='6'><path d='M0 0h8L4 5z' fill='#fff'/></svg>
<div class='t' style='left:230.5px;top:78px;font-size:10px;color:#fff;letter-spacing:-0.55px'>AUDUSD,H1</div>
<div class='t' style='left:292.3px;top:78px;font-size:10px;color:#fff;letter-spacing:-0.55px'>0.69732</div>
<div class='t' style='left:328.6px;top:78px;font-size:10px;color:#fff;letter-spacing:-0.55px'>0.69820</div>
<div class='t' style='left:365.5px;top:78px;font-size:10px;color:#fff;letter-spacing:-0.55px'>0.69732</div>
<div class='t' style='left:400.6px;top:78px;font-size:10px;color:#fff;letter-spacing:-0.55px'>0.69814</div><div class='a' style='left:211px;top:719px;width:1389px;height:2px;background:#f0f0f0'></div>
<div class='a' style='left:211px;top:721px;width:1389px;height:1px;background:#000'></div>
<div class='a' style='left:211px;top:722px;width:1389px;height:19px;background:#f0f0f0'></div>
<div class='t' style='left:227px;top:725px;color:#6d6d6d;letter-spacing:-0.75px'>EURUSD,H4</div>
<div class='t' style='left:311px;top:725px;color:#6d6d6d;letter-spacing:-0.75px'>USDCHF,H4</div>
<div class='t' style='left:395px;top:725px;color:#6d6d6d;letter-spacing:-0.75px'>GBPUSD,H4</div>
<div class='t' style='left:479px;top:725px;color:#6d6d6d;letter-spacing:-0.75px'>USDJPY,H4</div>
<div class='a' style='left:300px;top:725px;width:1px;height:13px;background:#555'></div>
<div class='a' style='left:384px;top:725px;width:1px;height:13px;background:#555'></div>
<div class='a' style='left:468px;top:725px;width:1px;height:13px;background:#555'></div>
<div class='a' style='left:549px;top:721px;width:88px;height:19px;background:#fff;border:1px solid #000;border-top:none'></div>
<div class='t' style='left:560px;top:725px;letter-spacing:-0.7px'>AUDUSD,H1</div>
<svg class='a' style='left:1564px;top:725px' width='32' height='10'><path d='M6 1v8L1 5z' fill='#a0a0a0'/><path d='M26 1v8l5-4z' fill='#a0a0a0'/></svg>
<div class='a' style='left:210px;top:71px;width:1px;height:670px;background:#a0a0a0'></div>
<div class='a' style='left:0;top:738px;width:211px;height:1px;background:#d0d0d0'></div>
<div class='a' style='left:0;top:741px;width:1600px;height:1px;background:#fff'></div>
<div class='a' style='left:0;top:742px;width:1600px;height:135px;background:#f0f0f0'></div>
<div class='t' style='left:3px;top:745px;font-size:12px;font-weight:bold'>×</div>
<div class='a' style='left:1px;top:759px;width:13px;height:115px;background:#dfe7f1'></div>
<div class='t' style='left:2.5px;top:873px;transform:rotate(-90deg);transform-origin:0 0;font-size:11.8px'>Terminal</div>
<div class='a' style='left:15px;top:745px;width:1582px;height:107px;background:#fff;border-top:1px solid #a0a0a0;border-left:1px solid #a0a0a0'></div>
<div class='a' style='left:171px;top:746px;width:1px;height:24px;background:#e5e5e5'></div>
<div class='a' style='left:388px;top:746px;width:1px;height:24px;background:#e5e5e5'></div>
<div class='a' style='left:496px;top:746px;width:1px;height:24px;background:#e5e5e5'></div>
<div class='a' style='left:580px;top:746px;width:1px;height:24px;background:#e5e5e5'></div>
<div class='a' style='left:688px;top:746px;width:1px;height:24px;background:#e5e5e5'></div>
<div class='a' style='left:808px;top:746px;width:1px;height:24px;background:#e5e5e5'></div>
<div class='a' style='left:928px;top:746px;width:1px;height:24px;background:#e5e5e5'></div>
<div class='a' style='left:1048px;top:746px;width:1px;height:24px;background:#e5e5e5'></div>
<div class='a' style='left:1168px;top:746px;width:1px;height:24px;background:#e5e5e5'></div>
<div class='a' style='left:1288px;top:746px;width:1px;height:24px;background:#e5e5e5'></div>
<div class='a' style='left:1408px;top:746px;width:1px;height:24px;background:#e5e5e5'></div>
<div class='t' style='left:22px;top:752px'>Order</div>
<div class='t' style='left:64px;top:753px;color:#777;font-size:10px'>/</div>
<div class='t' style='right:1217px;top:752px'>Time</div>
<div class='t' style='right:1108px;top:752px'>Type</div>
<div class='t' style='right:1025px;top:752px'>Size</div>
<div class='t' style='right:917px;top:752px'>Symbol</div>
<div class='t' style='right:797px;top:752px'>Price</div>
<div class='t' style='right:678px;top:752px'>S / L</div>
<div class='t' style='right:558px;top:752px'>T / P</div>
<div class='t' style='right:437px;top:752px'>Price</div>
<div class='t' style='right:318px;top:752px'>Commission</div>
<div class='t' style='right:198px;top:752px'>Swap</div>
<div class='t' style='right:10px;top:752px'>Profit</div>
<div class='a' style='left:16px;top:770px;width:1580px;height:19px;background:#c7c7c7'></div>
<svg class='a' style='left:22px;top:775px' width='11' height='11'><circle cx='5' cy='5.5' r='3.3' fill='#cfcfcf' stroke='#6a6a6a' stroke-width='1.3'/></svg>
<div class='t' style='left:38px;top:774px;font-weight:bold;font-size:11.7px'>Balance: 10 000.00 USD  Equity: 10 000.00  Free margin: 10 000.00</div>
<div class='t' style='right:8px;top:774px;font-weight:bold;font-size:11.7px'>0.00</div>
<div class='a' style='left:15px;top:851px;width:1582px;height:1px;background:#000'></div>
<div class='a' style='left:18px;top:851px;width:50px;height:20px;background:#fff;border:1px solid #000;border-top:none'></div>
<div class='t' style='left:28px;top:855px'>Trade</div>
<div class='t' style='left:77px;top:855px;color:#6d6d6d'>Exposure</div>
<div class='a' style='left:135px;top:855px;width:1px;height:13px;background:#555'></div>
<div class='t' style='left:145px;top:855px;color:#6d6d6d'>Account History</div>
<div class='a' style='left:241px;top:855px;width:1px;height:13px;background:#555'></div>
<div class='t' style='left:251px;top:855px;color:#6d6d6d'>News</div>
<div class='t' style='left:282px;top:861px;color:#ff0000;font-size:9px;font-weight:bold'>99</div>
<div class='a' style='left:302px;top:855px;width:1px;height:13px;background:#555'></div>
<div class='t' style='left:312px;top:855px;color:#6d6d6d'>Alerts</div>
<div class='a' style='left:352px;top:855px;width:1px;height:13px;background:#555'></div>
<div class='t' style='left:362px;top:855px;color:#6d6d6d'>Mailbox</div>
<div class='t' style='left:406px;top:861px;color:#ff0000;font-size:9px;font-weight:bold'>7</div>
<div class='a' style='left:422px;top:855px;width:1px;height:13px;background:#555'></div>
<div class='t' style='left:432px;top:855px;color:#6d6d6d'>Market</div>
<div class='t' style='left:470px;top:861px;color:#ff0000;font-size:9px;font-weight:bold'>144</div>
<div class='a' style='left:496px;top:855px;width:1px;height:13px;background:#555'></div>
<div class='t' style='left:506px;top:855px;color:#6d6d6d'>Signals</div>
<div class='a' style='left:553px;top:855px;width:1px;height:13px;background:#555'></div>
<div class='t' style='left:563px;top:855px;color:#6d6d6d'>Articles</div>
<div class='t' style='left:604px;top:861px;color:#ff0000;font-size:9px;font-weight:bold'>1</div>
<div class='a' style='left:619px;top:855px;width:1px;height:13px;background:#555'></div>
<div class='t' style='left:629px;top:855px;color:#6d6d6d'>Code Base</div>
<div class='a' style='left:694px;top:855px;width:1px;height:13px;background:#555'></div>
<div class='t' style='left:704px;top:855px;color:#6d6d6d'>Experts</div>
<div class='a' style='left:752px;top:855px;width:1px;height:13px;background:#555'></div>
<div class='t' style='left:762px;top:855px;color:#6d6d6d'>Journal</div>
<div class='a' style='left:811px;top:855px;width:1px;height:13px;background:#555'></div>
<div class='a' style='left:0;top:873px;width:1600px;height:2px;background:#fff'></div>
<div class='a' style='left:0;top:875px;width:1600px;height:1px;background:#a0a0a0'></div>
<div class='a' style='left:0;top:876px;width:1600px;height:22px;background:#f0f0f0'></div>
<div class='a' style='left:0;top:898px;width:1600px;height:2px;background:#505050'></div>
<div class='t' style='left:2px;top:884px;letter-spacing:-0.35px'>For Help, press F1</div>
<div class='a' style='left:906px;top:881px;width:1px;height:17px;background:#a0a0a0'></div>
<div class='a' style='left:1022px;top:881px;width:1px;height:17px;background:#a0a0a0'></div>
<div class='a' style='left:1124px;top:881px;width:1px;height:17px;background:#a0a0a0'></div>
<div class='a' style='left:1195px;top:881px;width:1px;height:17px;background:#a0a0a0'></div>
<div class='a' style='left:1265px;top:881px;width:1px;height:17px;background:#a0a0a0'></div>
<div class='a' style='left:1334px;top:881px;width:1px;height:17px;background:#a0a0a0'></div>
<div class='a' style='left:1404px;top:881px;width:1px;height:17px;background:#a0a0a0'></div>
<div class='a' style='left:1470px;top:881px;width:1px;height:17px;background:#a0a0a0'></div>
<div class='t' style='left:912px;top:884px;letter-spacing:-0.3px'>Default</div>
<div class='t' style='left:1028px;top:884px;letter-spacing:-0.3px'>2020.06.18 05:00</div>
<div class='t' style='left:1130px;top:884px;letter-spacing:-0.3px'>O: 0.68539</div>
<div class='t' style='left:1201px;top:884px;letter-spacing:-0.3px'>H: 0.68583</div>
<div class='t' style='left:1272px;top:884px;letter-spacing:-0.3px'>L: 0.68471</div>
<div class='t' style='left:1340px;top:884px;letter-spacing:-0.3px'>C: 0.68552</div>
<div class='t' style='left:1410px;top:884px;letter-spacing:-0.3px'>V: 2918</div>
<div class='t' style='left:1503px;top:884px;letter-spacing:-0.3px'>3157/7 kb</div>
<svg class='a' style='left:1476px;top:883px' width='24' height='13'><rect x='0' y='0' width='2' height='10.5' fill='#3f7a12'/><rect x='0' y='10.5' width='2' height='2.5' fill='#0a1a6a'/><rect x='3' y='0' width='2' height='9.1' fill='#3f7a12'/><rect x='3' y='9.1' width='2' height='3.9' fill='#0a1a6a'/><rect x='6' y='0' width='2' height='7.7' fill='#3f7a12'/><rect x='6' y='7.7' width='2' height='5.3' fill='#0a1a6a'/><rect x='9' y='0' width='2' height='6.3' fill='#3f7a12'/><rect x='9' y='6.3' width='2' height='6.7' fill='#0a1a6a'/><rect x='12' y='0' width='2' height='4.9' fill='#3f7a12'/><rect x='12' y='4.9' width='2' height='8.1' fill='#0a1a6a'/><rect x='15' y='0' width='2' height='3.5' fill='#3f7a12'/><rect x='15' y='3.5' width='2' height='9.5' fill='#0a1a6a'/><rect x='18' y='0' width='2' height='2.1' fill='#3f7a12'/><rect x='18' y='2.1' width='2' height='10.9' fill='#0a1a6a'/><rect x='21' y='0' width='2' height='0.7' fill='#3f7a12'/><rect x='21' y='0.7' width='2' height='12.3' fill='#0a1a6a'/></svg><div class='a' style='left:516px;top:255px;width:568px;height:383px;background:#f0f0f0;border:1px solid #dadada'></div>
<div class='a' style='left:517px;top:256px;width:566px;height:29px;background:#fff'></div>
<div class='t' style='left:524px;top:265px;font-size:11.4px'>Properties of AUDUSD,H1</div>
<div class='t' style='left:1012px;top:264px;font-size:12px'>?</div>
<svg class='a' style='left:1054px;top:263px' width='13' height='13'><path d='M1 1l10.5 10.5M11.5 1L1 11.5' stroke='#000' stroke-width='1.1'/></svg>
<div class='a' style='left:522px;top:313px;width:554px;height:288px;background:#fff;border:1px solid #d9d9d9'></div>
<div class='a' style='left:567px;top:294px;width:50px;height:20px;background:#f0f0f0;border:1px solid #d9d9d9;border-bottom:none'></div>
<div class='a' style='left:522px;top:292px;width:46px;height:22px;background:#fff;border:1px solid #d9d9d9;border-bottom:none'></div>
<div class='t' style='left:529px;top:297px;font-size:11.4px'>Colors</div>
<div class='t' style='left:571px;top:299px;font-size:11.4px;letter-spacing:-0.4px'>Common</div>
<div class='a' style='left:518px;top:288px;width:105px;height:30px;border:3px solid #f01010'></div>
<div class='t' style='right:886px;top:326px;font-size:11.4px'>Color scheme:</div>
<div class='a' style='left:721px;top:322px;width:120px;height:21px;background:#e6e6e6;border:1px solid #c2c2c2'></div>
<svg class='a' style='left:826px;top:329px' width='10' height='7'><path d='M1 1l4 4 4-4' fill='none' stroke='#505050' stroke-width='1.1'/></svg>
<div class='t' style='right:661px;top:327px;font-size:11.4px;letter-spacing:-0.2px'>Background:</div>
<div class='a' style='left:946px;top:322px;width:120px;height:21px;background:#fff;border:1px solid #7a7a7a'></div>
<div class='a' style='left:950px;top:325px;width:14px;height:14px;background:#000;border:1px solid #a0a0a0'></div>
<div class='t' style='left:969px;top:327px;font-size:11.4px;letter-spacing:-0.2px'>Black</div>
<svg class='a' style='left:1051px;top:330px' width='10' height='7'><path d='M1 1l4 4 4-4' fill='none' stroke='#404040' stroke-width='1.1'/></svg>
<div class='t' style='right:661px;top:351px;font-size:11.4px;letter-spacing:-0.2px'>Foreground:</div>
<div class='a' style='left:946px;top:346px;width:120px;height:21px;background:#fff;border:1px solid #7a7a7a'></div>
<div class='a' style='left:950px;top:349px;width:14px;height:14px;background:#fff;border:1px solid #a0a0a0'></div>
<div class='t' style='left:969px;top:351px;font-size:11.4px;letter-spacing:-0.2px'>White</div>
<svg class='a' style='left:1051px;top:354px' width='10' height='7'><path d='M1 1l4 4 4-4' fill='none' stroke='#404040' stroke-width='1.1'/></svg>
<div class='t' style='right:661px;top:376px;font-size:11.4px;letter-spacing:-0.2px'>Grid:</div>
<div class='a' style='left:946px;top:371px;width:120px;height:21px;background:#fff;border:1px solid #7a7a7a'></div>
<div class='a' style='left:950px;top:374px;width:14px;height:14px;background:#778899;border:1px solid #a0a0a0'></div>
<div class='t' style='left:969px;top:376px;font-size:11.4px;letter-spacing:-0.2px'>LightSlateGray</div>
<svg class='a' style='left:1051px;top:379px' width='10' height='7'><path d='M1 1l4 4 4-4' fill='none' stroke='#404040' stroke-width='1.1'/></svg>
<div class='t' style='right:661px;top:400px;font-size:11.4px;letter-spacing:-0.2px'>Bar Up:</div>
<div class='a' style='left:946px;top:395px;width:120px;height:21px;background:#fff;border:1px solid #7a7a7a'></div>
<div class='a' style='left:950px;top:398px;width:14px;height:14px;background:#00ff00;border:1px solid #a0a0a0'></div>
<div class='t' style='left:969px;top:400px;font-size:11.4px;letter-spacing:-0.2px'>Lime</div>
<svg class='a' style='left:1051px;top:403px' width='10' height='7'><path d='M1 1l4 4 4-4' fill='none' stroke='#404040' stroke-width='1.1'/></svg>
<div class='t' style='right:661px;top:425px;font-size:11.4px;letter-spacing:-0.2px'>Bar Down:</div>
<div class='a' style='left:946px;top:420px;width:120px;height:21px;background:#fff;border:1px solid #7a7a7a'></div>
<div class='a' style='left:950px;top:423px;width:14px;height:14px;background:#00ff00;border:1px solid #a0a0a0'></div>
<div class='t' style='left:969px;top:425px;font-size:11.4px;letter-spacing:-0.2px'>Lime</div>
<svg class='a' style='left:1051px;top:428px' width='10' height='7'><path d='M1 1l4 4 4-4' fill='none' stroke='#404040' stroke-width='1.1'/></svg>
<div class='t' style='right:661px;top:449px;font-size:11.4px;letter-spacing:-0.2px'>Bull candle:</div>
<div class='a' style='left:946px;top:444px;width:120px;height:21px;background:#fff;border:1px solid #7a7a7a'></div>
<div class='a' style='left:950px;top:447px;width:14px;height:14px;background:#000;border:1px solid #a0a0a0'></div>
<div class='t' style='left:969px;top:449px;font-size:11.4px;letter-spacing:-0.2px'>Black</div>
<svg class='a' style='left:1051px;top:452px' width='10' height='7'><path d='M1 1l4 4 4-4' fill='none' stroke='#404040' stroke-width='1.1'/></svg>
<div class='t' style='right:661px;top:473px;font-size:11.4px;letter-spacing:-0.2px'>Bear candle:</div>
<div class='a' style='left:946px;top:468px;width:120px;height:21px;background:#fff;border:1px solid #7a7a7a'></div>
<div class='a' style='left:950px;top:471px;width:14px;height:14px;background:#fff;border:1px solid #a0a0a0'></div>
<div class='t' style='left:969px;top:473px;font-size:11.4px;letter-spacing:-0.2px'>White</div>
<svg class='a' style='left:1051px;top:476px' width='10' height='7'><path d='M1 1l4 4 4-4' fill='none' stroke='#404040' stroke-width='1.1'/></svg>
<div class='t' style='right:661px;top:498px;font-size:11.4px;letter-spacing:-0.2px'>Line graph:</div>
<div class='a' style='left:946px;top:493px;width:120px;height:21px;background:#fff;border:1px solid #7a7a7a'></div>
<div class='a' style='left:950px;top:496px;width:14px;height:14px;background:#00ff00;border:1px solid #a0a0a0'></div>
<div class='t' style='left:969px;top:498px;font-size:11.4px;letter-spacing:-0.2px'>Lime</div>
<svg class='a' style='left:1051px;top:501px' width='10' height='7'><path d='M1 1l4 4 4-4' fill='none' stroke='#404040' stroke-width='1.1'/></svg>
<div class='t' style='right:661px;top:522px;font-size:11.4px;letter-spacing:-0.2px'>Volumes:</div>
<div class='a' style='left:946px;top:517px;width:120px;height:21px;background:#fff;border:1px solid #7a7a7a'></div>
<div class='a' style='left:950px;top:520px;width:14px;height:14px;background:#32cd32;border:1px solid #a0a0a0'></div>
<div class='t' style='left:969px;top:522px;font-size:11.4px;letter-spacing:-0.2px'>LimeGreen</div>
<svg class='a' style='left:1051px;top:525px' width='10' height='7'><path d='M1 1l4 4 4-4' fill='none' stroke='#404040' stroke-width='1.1'/></svg>
<div class='t' style='right:661px;top:547px;font-size:11.4px;letter-spacing:-0.2px'>Ask line:</div>
<div class='a' style='left:946px;top:542px;width:120px;height:21px;background:#fff;border:1px solid #7a7a7a'></div>
<div class='a' style='left:950px;top:545px;width:14px;height:14px;background:#ff0000;border:1px solid #a0a0a0'></div>
<div class='t' style='left:969px;top:547px;font-size:11.4px;letter-spacing:-0.2px'>Red</div>
<svg class='a' style='left:1051px;top:550px' width='10' height='7'><path d='M1 1l4 4 4-4' fill='none' stroke='#404040' stroke-width='1.1'/></svg>
<div class='t' style='right:661px;top:571px;font-size:11.4px;letter-spacing:-0.2px'>Stop levels:</div>
<div class='a' style='left:946px;top:566px;width:120px;height:21px;background:#fff;border:1px solid #7a7a7a'></div>
<div class='a' style='left:950px;top:569px;width:14px;height:14px;background:#ff0000;border:1px solid #a0a0a0'></div>
<div class='t' style='left:969px;top:571px;font-size:11.4px;letter-spacing:-0.2px'>Red</div>
<svg class='a' style='left:1051px;top:574px' width='10' height='7'><path d='M1 1l4 4 4-4' fill='none' stroke='#404040' stroke-width='1.1'/></svg>
<div class='a' style='left:842px;top:609px;width:72px;height:21px;background:#e1e1e1;border:2px solid #0078d7'></div>
<div class='t' style='left:842px;top:614px;width:72px;text-align:center;font-size:11.4px'>OK</div>
<div class='a' style='left:923px;top:609px;width:73px;height:21px;background:#e1e1e1;border:1px solid #adadad'></div>
<div class='t' style='left:923px;top:614px;width:73px;text-align:center;font-size:11.4px'>Cancel</div>
<div class='a' style='left:1004px;top:609px;width:73px;height:21px;background:#e1e1e1;border:1px solid #adadad'></div>
<div class='t' style='left:1004px;top:614px;width:73px;text-align:center;font-size:11.4px'>Reset</div>
<svg class='a' style='left:534px;top:347px' width='308' height='243' viewBox='534 347 308 243' shape-rendering='crispEdges'>
<rect x='534.5' y='347.5' width='307' height='242' fill='#000' stroke='#a0a0a0'/>
<path d='M570.5 351V573M602.5 351V573M634.5 351V573M666.5 351V573M698.5 351V573M730.5 351V573M762.5 351V573M794.5 351V573M538 370.5H802M538 403.5H802M538 436.5H802M538 470.5H802M538 503.5H802M538 536.5H802M538 570.5H802' stroke='#778899' stroke-dasharray='3 3' fill='none'/>
<path d='M539.5 556V572M541.5 563V572M543.5 563V572M545.5 564V572M547.5 565V572M549.5 561V572M551.5 559V572M553.5 555V572M555.5 558V572M557.5 565V572M559.5 564V572M561.5 565V572M563.5 563V572M565.5 569V572M567.5 568V572M569.5 564V572M571.5 568V572M573.5 563V572M575.5 558V572M577.5 563V572M579.5 565V572M581.5 568V572M583.5 564V572M585.5 562V572M587.5 557V572M589.5 551V572M591.5 561V572M593.5 561V572M595.5 563V572M597.5 565V572M599.5 558V572M601.5 554V572M603.5 561V572M605.5 563V572M607.5 563V572M609.5 565V572M611.5 561V572M613.5 568V572M615.5 569V572M617.5 564V572M619.5 562V572M621.5 563V572M623.5 565V572M625.5 568V572M627.5 565V572M629.5 568V572M631.5 564V572M633.5 558V572M635.5 555V572M637.5 558V572M639.5 561V572M641.5 564V572M643.5 563V572M645.5 563V572M647.5 558V572M649.5 556V572M651.5 555V572M653.5 561V572M655.5 563V572M657.5 562V572M659.5 563V572M661.5 569V572M663.5 567V572M665.5 568V572M667.5 567V572M669.5 563V572M671.5 562V572M673.5 565V572M675.5 564V572M677.5 565V572M679.5 563V572M681.5 561V572M683.5 555V572M685.5 561V572M687.5 562V572M689.5 564V572M691.5 564V572M693.5 559V572M695.5 558V572M697.5 545V572M699.5 546V572M701.5 559V572M703.5 563V572M705.5 562V572M707.5 559V572M709.5 569V572M711.5 568V572M713.5 570V572M715.5 568V572M717.5 564V572M719.5 563V572M721.5 565V572M723.5 568V572M725.5 565V572M727.5 567V572M729.5 563V572M731.5 561V572M733.5 567V572M735.5 561V572M737.5 565V572M739.5 565V572M741.5 563V572M743.5 554V572M745.5 554V572M747.5 558V572M749.5 563V572M751.5 567V572M753.5 567V572M755.5 563V572M757.5 568V572M759.5 568V572M761.5 563V572M763.5 564V572M765.5 563V572M767.5 561V572M769.5 565V572M771.5 565V572M773.5 568V572M775.5 563V572M777.5 564V572M779.5 557V572M781.5 561V572M783.5 563V572M785.5 564V572M787.5 563V572M789.5 565V572M791.5 559V572M793.5 568V572' stroke='#32cd32' fill='none'/>
<path d='M539.5 417V449M541.5 436V467M543.5 450V476M545.5 447V492M547.5 425V485M549.5 411V440M551.5 397V439M553.5 398V449M555.5 401V439M557.5 422V440M559.5 416V433M561.5 421V443M563.5 426V440M565.5 426V446M567.5 415V435M569.5 422V441M571.5 415V443M573.5 371V445M575.5 389V443M577.5 426V482M579.5 447V469M581.5 441V471M583.5 429V488M585.5 472V503M587.5 499V532M589.5 500V547M591.5 503V566M593.5 522V555M595.5 503V547M597.5 483V528M599.5 468V502M601.5 423V484M603.5 422V449M605.5 425V470M607.5 451V471M609.5 453V488M611.5 470V522M613.5 499V520M615.5 494V513M617.5 491V516M619.5 493V517M621.5 493V539M623.5 501V533M625.5 503V516M627.5 503V526M629.5 507V531M631.5 511V546M633.5 494V552M635.5 488V539M637.5 484V525M639.5 513V546M641.5 503V533M643.5 477V523M645.5 483V520M647.5 430V504M649.5 429V464M651.5 446V490M653.5 417V457M655.5 417V447M657.5 409V429M659.5 409V418M661.5 401V420M663.5 407V420M665.5 408V420M667.5 393V417M669.5 378V421M671.5 413V446M673.5 429V440M675.5 398V437M677.5 379V416M679.5 390V420M681.5 389V422M683.5 379V423M685.5 362V405M687.5 391V417M689.5 393V436M691.5 396V428M693.5 389V412M695.5 390V431M697.5 386V480M699.5 453V497M701.5 456V486M703.5 460V483M705.5 454V478M707.5 445V479M709.5 456V473M711.5 452V473M713.5 456V473M715.5 453V476M717.5 463V533M719.5 490V514M721.5 489V523M723.5 508V528M725.5 509V534M727.5 527V552M729.5 533V562M731.5 511V562M733.5 491V521M735.5 477V504M737.5 463V488M739.5 469V502M741.5 482V523M743.5 442V496M745.5 448V495M747.5 458V485M749.5 470V533M751.5 493V525M753.5 494V514M755.5 484V512M757.5 493V508M759.5 477V494M761.5 469V502M763.5 469V504M765.5 485V520M767.5 454V490M769.5 436V464M771.5 430V453M773.5 436V445M775.5 405V440M777.5 413V437M779.5 411V448M781.5 432V476M783.5 438V473M785.5 428V455M787.5 415V451M789.5 432V445M791.5 413V459M793.5 410V435' stroke='#00ff00' fill='none'/>
<path d='M538 413.5H802' stroke='#778899'/>
<rect x='537.5' y='350.5' width='265' height='223' fill='none' stroke='#fff'/>
<path d='M802 370.5H806M802 403.5H806M802 436.5H806M802 470.5H806M802 503.5H806M802 536.5H806M802 570.5H806M538.5 573V578M602.5 573V578M666.5 573V578M730.5 573V578' stroke='#fff'/>
</svg>
<div class='t' style='left:807px;top:366.4px;font-size:9.6px;color:#fff;letter-spacing:-0.38px'>0.69980</div>
<div class='t' style='left:807px;top:399.4px;font-size:9.6px;color:#fff;letter-spacing:-0.38px'>0.69850</div>
<div class='t' style='left:807px;top:432.4px;font-size:9.6px;color:#fff;letter-spacing:-0.38px'>0.69720</div>
<div class='t' style='left:807px;top:466.4px;font-size:9.6px;color:#fff;letter-spacing:-0.38px'>0.69590</div>
<div class='t' style='left:807px;top:499.4px;font-size:9.6px;color:#fff;letter-spacing:-0.38px'>0.69460</div>
<div class='t' style='left:807px;top:532.4px;font-size:9.6px;color:#fff;letter-spacing:-0.38px'>0.69330</div>
<div class='t' style='left:807px;top:566.4px;font-size:9.6px;color:#fff;letter-spacing:-0.38px'>0.69200</div>
<div class='a' style='left:804px;top:408px;width:37px;height:11px;background:#fff'></div>
<div class='t' style='left:807px;top:409.4px;font-size:9.6px;color:#000;letter-spacing:-0.38px'>0.69811</div>
<div class='t' style='left:538px;top:577.6px;font-size:9.6px;color:#fff;letter-spacing:-0.25px'>6 Jul 10:00</div>
<div class='t' style='left:602px;top:577.6px;font-size:9.6px;color:#fff;letter-spacing:-0.25px'>7 Jul 18:00</div>
<div class='t' style='left:666px;top:577.6px;font-size:9.6px;color:#fff;letter-spacing:-0.25px'>9 Jul 02:00</div>
<div class='t' style='left:730px;top:577.6px;font-size:9.6px;color:#fff;letter-spacing:-0.25px'>10 Jul 10:00</div>
<div class='t' style='left:553.7px;top:355px;font-size:10px;color:#fff;letter-spacing:-0.55px'>AUDUSD,H1</div>
<div class='t' style='left:615.5px;top:355px;font-size:10px;color:#fff;letter-spacing:-0.55px'>0.69732</div>
<div class='t' style='left:651.4px;top:355px;font-size:10px;color:#fff;letter-spacing:-0.55px'>0.69820</div>
<div class='t' style='left:686.9px;top:355px;font-size:10px;color:#fff;letter-spacing:-0.55px'>0.69732</div>
<div class='t' style='left:722.8px;top:355px;font-size:10px;color:#fff;letter-spacing:-0.55px'>0.69811</div><svg class='a' style='left:2px;top:48px' width='4' height='19' viewBox='0 0 4 19' ><rect x='0' y='0' width='4' height='1' fill='#a8a8a8'/><rect x='0' y='2' width='4' height='1' fill='#a8a8a8'/><rect x='0' y='4' width='4' height='1' fill='#a8a8a8'/><rect x='0' y='6' width='4' height='1' fill='#a8a8a8'/><rect x='0' y='8' width='4' height='1' fill='#a8a8a8'/><rect x='0' y='10' width='4' height='1' fill='#a8a8a8'/><rect x='0' y='12' width='4' height='1' fill='#a8a8a8'/><rect x='0' y='14' width='4' height='1' fill='#a8a8a8'/><rect x='0' y='16' width='4' height='1' fill='#a8a8a8'/></svg>
<svg class='a' style='left:10px;top:49px' width='20' height='18' viewBox='0 0 20 18' ><rect x='.5' y='.5' width='13' height='11' fill='#eef4fb' stroke='#2b6fd0' stroke-dasharray='1.5 .8'/><rect x='1' y='1' width='12' height='2' fill='#9cc2ef'/><path d='M10.333333333333334 4.5h3.8333333333333335v3.8333333333333335h3.8333333333333335v3.8333333333333335h-3.8333333333333335v3.8333333333333335h-3.8333333333333335v-3.8333333333333335h-3.8333333333333335v-3.8333333333333335h3.8333333333333335z' fill='#33c033' stroke='#0f7f0f' stroke-width='1'/></svg>
<svg class='a' style='left:33px;top:57px' width='6' height='4' viewBox='0 0 6 4' ><path d='M0 0h6L3 3.5z' fill='#000'/></svg>
<svg class='a' style='left:47px;top:49px' width='20' height='18' viewBox='0 0 20 18' ><rect x='.5' y='.5' width='13' height='10' fill='#eef4fb' stroke='#2b6fd0' stroke-dasharray='1.5 .8'/><rect x='3.5' y='5.5' width='14' height='11' fill='#eef4fb' stroke='#2b6fd0' stroke-dasharray='1.5 .8'/><path d='M2 4h9M6 13h9' stroke='#4477bb'/></svg>
<svg class='a' style='left:70px;top:57px' width='6' height='4' viewBox='0 0 6 4' ><path d='M0 0h6L3 3.5z' fill='#000'/></svg>
<div class='a' style='left:83px;top:47px;width:1px;height:21px;background:#a0a0a0'></div>
<div class='a' style='left:88px;top:46px;width:25px;height:22px;background:#f8f8f8;border-top:1px solid #a0a0a0;border-left:1px solid #a0a0a0;border-right:1px solid #fff;border-bottom:1px solid #fff'></div>
<svg class='a' style='left:92px;top:50px' width='16' height='17' viewBox='0 0 16 17' ><rect x='.5' y='.5' width='15' height='15' fill='#f4f8fc' stroke='#3b7bd6' stroke-width='1'/><rect x='1' y='1' width='14' height='2' fill='#a9c9f0'/><path d='M4.5 3.5l3 3h-2v3h-2v-3h-2z' fill='#2eaa2e'/><path d='M9.5 14.5l3-3h-2v-3h-2v3h-2z' fill='#ee4422'/></svg>
<svg class='a' style='left:120px;top:50px' width='17' height='17' viewBox='0 0 17 17' ><circle cx='8.5' cy='8.5' r='5' fill='none' stroke='#555' stroke-width='1.4'/><path d='M8.5 1v15M1 8.5h15' stroke='#555' stroke-width='1.3'/></svg>
<svg class='a' style='left:146px;top:49px' width='20' height='18' viewBox='0 0 20 18' ><path d='M1 3h5l1 1.5h6v8H1z' fill='#f5dc8a' stroke='#c79a32'/><path d='M13 7l1.6 3.3 3.6.5-2.6 2.5.6 3.6-3.2-1.7-3.2 1.7.6-3.6-2.6-2.5 3.6-.5z' fill='#f3c540' stroke='#b8802a' stroke-width='.9'/><path d='M5 13v4' stroke='#333' stroke-dasharray='1 1'/></svg>
<div class='a' style='left:172px;top:46px;width:25px;height:22px;background:#f8f8f8;border-top:1px solid #a0a0a0;border-left:1px solid #a0a0a0;border-right:1px solid #fff;border-bottom:1px solid #fff'></div>
<svg class='a' style='left:176px;top:50px' width='17' height='16' viewBox='0 0 17 16' ><rect x='.5' y='.5' width='15' height='14' fill='#fff' stroke='#2b6fd0' stroke-width='1.2'/><rect x='1' y='1' width='3' height='13' fill='#3b7bd6'/><path d='M6 4h8M6 7h8M6 10h8' stroke='#7a9fd6'/><path d='M5 4h1M5 7h1M5 10h1' stroke='#d22'/></svg>
<svg class='a' style='left:204px;top:50px' width='19' height='18' viewBox='0 0 19 18' ><rect x='.5' y='.5' width='12' height='13' fill='#f4f4f4' stroke='#888'/><path d='M2 3h8M2 5h2M8 5h2' stroke='#999'/><circle cx='8' cy='9' r='4' fill='#cfe3f7' stroke='#4a86d0'/><path d='M11 12l4.5 4.5' stroke='#d08a2a' stroke-width='2'/></svg>
<div class='a' style='left:229px;top:47px;width:1px;height:21px;background:#a0a0a0'></div>
<svg class='a' style='left:238px;top:49px' width='18' height='19' viewBox='0 0 18 19' ><path d='M.5 .5h8l4 4v10H.5z' fill='#f6f6f6' stroke='#666'/><path d='M2.5 4h4M2.5 7h7M2.5 10h5' stroke='#888'/><path d='M9.166666666666666 7.5h3.6666666666666665v3.6666666666666665h3.6666666666666665v3.6666666666666665h-3.6666666666666665v3.6666666666666665h-3.6666666666666665v-3.6666666666666665h-3.6666666666666665v-3.6666666666666665h3.6666666666666665z' fill='#33c033' stroke='#0f7f0f' stroke-width='1'/></svg>
<svg class='a' style='left:326px;top:50px' width='18' height='16' viewBox='0 0 18 16' ><path d='M1 10L8 1l8 6-6 8z' fill='#e8a23a' stroke='#a86418'/><path d='M3 10l6-7 5 4' fill='none' stroke='#f7d08a'/></svg>
<svg class='a' style='left:354px;top:49px' width='18' height='18' viewBox='0 0 18 18' ><rect x='3.5' y='.5' width='10' height='10' fill='#dbe9f8' stroke='#2b6fd0'/><path d='M5 4h7M5 7h7' stroke='#2b6fd0'/><path d='M2 16c-2 0-2-4 1-4 0-3 4-3 5-1 1-2 6-2 6 1 3 0 3 4 0 4z' fill='#e9eef3' stroke='#7d8fa6'/></svg>
<svg class='a' style='left:382px;top:49px' width='18' height='18' viewBox='0 0 18 18' ><circle cx='9' cy='9' r='7.5' fill='none' stroke='#5a9de0' stroke-width='1.2'/><circle cx='9' cy='9' r='4.5' fill='none' stroke='#5a9de0' stroke-width='1.2'/><circle cx='9' cy='9' r='2' fill='#2b6fd0'/><path d='M10 10l5 6' stroke='#3bb03b' stroke-width='2'/></svg>
<svg class='a' style='left:409px;top:49px' width='20' height='19' viewBox='0 0 20 19' ><path d='M1.5 8.5L9 9l6 5-4 4z' fill='#f2c779' stroke='#b7772b'/><path d='M3 10l6 1 4 4' fill='none' stroke='#e39b3b'/><path d='M2 8c-1.5 0-1.5-3 .5-3 0-2.5 3-3 4-1.5 1-2.5 5-2.5 5.5 0 2-.5 3.5 1 3 2.5 2 0 2 2.5 0 2.5z' fill='#8cc3ec' stroke='#3f82c6'/><circle cx='14.5' cy='14' r='4' fill='#e3262a'/><rect x='12.7' y='12.2' width='3.6' height='3.6' fill='#fff'/></svg>
<div class='a' style='left:503px;top:47px;width:1px;height:21px;background:#a0a0a0'></div>
<svg class='a' style='left:507px;top:48px' width='4' height='19' viewBox='0 0 4 19' ><rect x='0' y='0' width='4' height='1' fill='#a8a8a8'/><rect x='0' y='2' width='4' height='1' fill='#a8a8a8'/><rect x='0' y='4' width='4' height='1' fill='#a8a8a8'/><rect x='0' y='6' width='4' height='1' fill='#a8a8a8'/><rect x='0' y='8' width='4' height='1' fill='#a8a8a8'/><rect x='0' y='10' width='4' height='1' fill='#a8a8a8'/><rect x='0' y='12' width='4' height='1' fill='#a8a8a8'/><rect x='0' y='14' width='4' height='1' fill='#a8a8a8'/><rect x='0' y='16' width='4' height='1' fill='#a8a8a8'/></svg>
<div class='a' style='left:513px;top:46px;width:25px;height:22px;background:#f8f8f8;border-top:1px solid #a0a0a0;border-left:1px solid #a0a0a0;border-right:1px solid #fff;border-bottom:1px solid #fff'></div>
<svg class='a' style='left:518px;top:51px' width='16' height='16' viewBox='0 0 16 16' ><path d='M2.5 1v14M.5 14.5h14M.5 3l2-2 2 2M13 12.5l2 2-2 2' stroke='#444' fill='none' stroke-width='1.1'/><path d='M8.5 3v8M6 9h2.5M8.5 4.5h2.5' stroke='#2a9a2a' stroke-width='1.3' fill='none'/></svg>
<svg class='a' style='left:546px;top:50px' width='16' height='17' viewBox='0 0 16 17' ><path d='M2.5 2v14M.5 15.5h14M.5 4l2-2 2 2M13 13.5l2 2-2 2' stroke='#444' fill='none' stroke-width='1.1'/><path d='M9.5 1v12' stroke='#1a7a1a'/><rect x='7.5' y='3.5' width='4' height='7' fill='#3cc23c' stroke='#1a7a1a'/></svg>
<svg class='a' style='left:574px;top:50px' width='16' height='17' viewBox='0 0 16 17' ><path d='M2.5 2v14M.5 15.5h14M.5 4l2-2 2 2M13 13.5l2 2-2 2' stroke='#444' fill='none' stroke-width='1.1'/><path d='M2.5 11C5 6 7.5 4.5 9 5s3 3 4.5 4.5' stroke='#2a9a2a' stroke-width='1.2' fill='none'/></svg>
<div class='a' style='left:598px;top:47px;width:1px;height:21px;background:#a0a0a0'></div>
<svg class='a' style='left:606px;top:49px' width='18' height='18' viewBox='0 0 18 18' ><circle cx='7' cy='7' r='5.5' fill='#d6ecfb' stroke='#3a84d6' stroke-width='1.4'/><path d='M4 7h6M7 4v6' stroke='#3a84d6' stroke-width='1.4'/><path d='M11 11l5 5' stroke='#d49a3a' stroke-width='2.4'/></svg>
<svg class='a' style='left:634px;top:49px' width='18' height='18' viewBox='0 0 18 18' ><circle cx='7' cy='7' r='5.5' fill='#d6ecfb' stroke='#3a84d6' stroke-width='1.4'/><path d='M4 7h6' stroke='#3a84d6' stroke-width='1.4'/><path d='M11 11l5 5' stroke='#d49a3a' stroke-width='2.4'/></svg>
<svg class='a' style='left:663px;top:50px' width='17' height='17' viewBox='0 0 17 17' ><rect x='0' y='0' width='8' height='8' fill='#2f9e3a'/><rect x='9' y='0' width='8' height='8' fill='#2c6fd2'/><rect x='0' y='9' width='8' height='8' fill='#2c6fd2'/><rect x='9' y='9' width='8' height='8' fill='#2f9e3a'/><rect x='1.5' y='3' width='5' height='3.5' fill='#f3f3e6'/><rect x='10.5' y='3' width='5' height='3.5' fill='#f3f3e6'/><rect x='1.5' y='12' width='5' height='3.5' fill='#f3f3e6'/><rect x='10.5' y='12' width='5' height='3.5' fill='#f3f3e6'/></svg>
<div class='a' style='left:688px;top:47px;width:1px;height:21px;background:#a0a0a0'></div>
<div class='a' style='left:693px;top:46px;width:25px;height:22px;background:#f8f8f8;border-top:1px solid #a0a0a0;border-left:1px solid #a0a0a0;border-right:1px solid #fff;border-bottom:1px solid #fff'></div>
<svg class='a' style='left:698px;top:51px' width='16' height='16' viewBox='0 0 16 16' ><path d='M2.5 1v14M.5 14.5h14M.5 3l2-2 2 2M13 12.5l2 2-2 2' stroke='#444' fill='none' stroke-width='1.1'/><path d='M7 3l5 4-5 4z' fill='#2a9a2a'/></svg>
<svg class='a' style='left:726px;top:51px' width='17' height='16' viewBox='0 0 17 16' ><path d='M2.5 1v14M.5 14.5h14M.5 3l2-2 2 2M13 12.5l2 2-2 2' stroke='#444' fill='none' stroke-width='1.1'/><path d='M8.5 1v10' stroke='#2c5fc0' stroke-width='1.3'/><path d='M15 6H10M12 4l-2 2 2 2' stroke='#d33' fill='none' stroke-width='1.2'/></svg>
<div class='a' style='left:750px;top:47px;width:1px;height:21px;background:#a0a0a0'></div>
<svg class='a' style='left:759px;top:49px' width='18' height='19' viewBox='0 0 18 19' ><path d='M.5 .5h8l4 4v10H.5z' fill='#f6f6f6' stroke='#666'/><path d='M3 4v7M3 4h3' stroke='#777'/><path d='M9.166666666666666 7.5h3.6666666666666665v3.6666666666666665h3.6666666666666665v3.6666666666666665h-3.6666666666666665v3.6666666666666665h-3.6666666666666665v-3.6666666666666665h-3.6666666666666665v-3.6666666666666665h3.6666666666666665z' fill='#33c033' stroke='#0f7f0f' stroke-width='1'/></svg>
<svg class='a' style='left:781px;top:57px' width='6' height='4' viewBox='0 0 6 4' ><path d='M0 0h6L3 3.5z' fill='#000'/></svg>
<svg class='a' style='left:795px;top:49px' width='18' height='18' viewBox='0 0 18 18' ><circle cx='9' cy='9' r='8' fill='#2a74d8' stroke='#1a4fa8'/><circle cx='9' cy='9' r='5.8' fill='#f7f7f7'/><path d='M9 5v4h3' stroke='#333' stroke-width='1.2' fill='none'/></svg>
<svg class='a' style='left:817px;top:57px' width='6' height='4' viewBox='0 0 6 4' ><path d='M0 0h6L3 3.5z' fill='#000'/></svg>
<svg class='a' style='left:833px;top:50px' width='17' height='16' viewBox='0 0 17 16' ><rect x='.5' y='.5' width='16' height='15' fill='#fff' stroke='#2b6fd0' stroke-width='1.2'/><rect x='1' y='1' width='15' height='2' fill='#9cc2ef'/><path d='M1 8h15' stroke='#2b6fd0'/><path d='M2 6l3-1 3 1 3-1 4-1' stroke='#b3401a' fill='none'/><path d='M2 13l3-1 3-2 3 2 4-2' stroke='#2a9a2a' fill='none'/></svg>
<svg class='a' style='left:855px;top:57px' width='6' height='4' viewBox='0 0 6 4' ><path d='M0 0h6L3 3.5z' fill='#000'/></svg>
<div class='a' style='left:865px;top:47px;width:1px;height:21px;background:#a0a0a0'></div>
<svg class='a' style='left:869px;top:48px' width='4' height='19' viewBox='0 0 4 19' ><rect x='0' y='0' width='4' height='1' fill='#a8a8a8'/><rect x='0' y='2' width='4' height='1' fill='#a8a8a8'/><rect x='0' y='4' width='4' height='1' fill='#a8a8a8'/><rect x='0' y='6' width='4' height='1' fill='#a8a8a8'/><rect x='0' y='8' width='4' height='1' fill='#a8a8a8'/><rect x='0' y='10' width='4' height='1' fill='#a8a8a8'/><rect x='0' y='12' width='4' height='1' fill='#a8a8a8'/><rect x='0' y='14' width='4' height='1' fill='#a8a8a8'/><rect x='0' y='16' width='4' height='1' fill='#a8a8a8'/></svg>
<div class='a' style='left:875px;top:46px;width:25px;height:22px;background:#f8f8f8;border-top:1px solid #a0a0a0;border-left:1px solid #a0a0a0;border-right:1px solid #fff;border-bottom:1px solid #fff'></div>
<svg class='a' style='left:882px;top:51px' width='12' height='16' viewBox='0 0 12 16' ><path d='M1 1v12l3-3 3 5 2-1-3-5h4z' fill='#555'/></svg>
<svg class='a' style='left:908px;top:50px' width='16' height='16' viewBox='0 0 16 16' ><path d='M8 1v14M1 8h14' stroke='#555' stroke-width='1.2'/></svg>
<div class='a' style='left:932px;top:47px;width:1px;height:21px;background:#a0a0a0'></div>
<svg class='a' style='left:948px;top:51px' width='3' height='14' viewBox='0 0 3 14' ><path d='M1.5 0v14' stroke='#555' stroke-width='1.2'/></svg>
<svg class='a' style='left:971px;top:57px' width='14' height='3' viewBox='0 0 14 3' ><path d='M0 1.5h14' stroke='#555' stroke-width='1.2'/></svg>
<svg class='a' style='left:998px;top:51px' width='15' height='15' viewBox='0 0 15 15' ><path d='M1 14L14 1' stroke='#555' stroke-width='1.2'/></svg>
<svg class='a' style='left:1025px;top:50px' width='18' height='19' viewBox='0 0 18 19' ><path d='M1 11L10 2M3 13L13 3M1 8h11M3 5h10' stroke='#555' stroke-width='1' fill='none'/><path d='M13.5 13.5h3M13.5 13.5v5h3M13.5 16h2.5' stroke='#555' fill='none'/></svg>
<svg class='a' style='left:1054px;top:50px' width='17' height='19' viewBox='0 0 17 19' ><path d='M1 1.5h13M1 4.5h13M1 7.5h13M1 10.5h13M1 13.5h8' stroke='#777' stroke-dasharray='1 1'/><path d='M11.5 13.5h3.5M11.5 13.5v5M11.5 16h3' stroke='#555' fill='none'/></svg>
<div class='t' style='left:1085px;top:51px;font-size:13px;font-weight:bold;color:#555'>A</div>
<svg class='a' style='left:1110px;top:50px' width='15' height='15' viewBox='0 0 15 15' ><rect x='.5' y='.5' width='14' height='14' fill='none' stroke='#666' stroke-dasharray='1 1'/><path d='M3.5 3.5h8M7.5 3.5v9' stroke='#555' stroke-width='1.8'/></svg>
<svg class='a' style='left:1137px;top:50px' width='17' height='16' viewBox='0 0 17 16' ><path d='M1 5l3-4 3 4z' fill='#555'/><path d='M4 5l4 5 6-8' stroke='#555' stroke-width='1.4' fill='none'/><path d='M9 11l3 4 3-4z' fill='#555'/></svg>
<svg class='a' style='left:1158px;top:57px' width='6' height='4' viewBox='0 0 6 4' ><path d='M0 0h6L3 3.5z' fill='#000'/></svg>
<div class='a' style='left:1169px;top:47px;width:1px;height:21px;background:#a0a0a0'></div>
<svg class='a' style='left:1173px;top:48px' width='4' height='19' viewBox='0 0 4 19' ><rect x='0' y='0' width='4' height='1' fill='#a8a8a8'/><rect x='0' y='2' width='4' height='1' fill='#a8a8a8'/><rect x='0' y='4' width='4' height='1' fill='#a8a8a8'/><rect x='0' y='6' width='4' height='1' fill='#a8a8a8'/><rect x='0' y='8' width='4' height='1' fill='#a8a8a8'/><rect x='0' y='10' width='4' height='1' fill='#a8a8a8'/><rect x='0' y='12' width='4' height='1' fill='#a8a8a8'/><rect x='0' y='14' width='4' height='1' fill='#a8a8a8'/><rect x='0' y='16' width='4' height='1' fill='#a8a8a8'/></svg>
<div class='a' style='left:1291px;top:46px;width:25px;height:22px;background:#f8f8f8;border-top:1px solid #a0a0a0;border-left:1px solid #a0a0a0;border-right:1px solid #fff;border-bottom:1px solid #fff'></div>
<div class='a' style='left:1430px;top:47px;width:1px;height:21px;background:#a0a0a0'></div>
<div class='t' style='left:1184px;top:54px;font-size:10.5px;color:#444'>M1</div>
<div class='t' style='left:1212px;top:54px;font-size:10.5px;color:#444'>M5</div>
<div class='t' style='left:1238px;top:54px;font-size:10.5px;color:#444'>M15</div>
<div class='t' style='left:1266px;top:54px;font-size:10.5px;color:#444'>M30</div>
<div class='t' style='left:1297px;top:54px;font-size:10.5px;color:#444'>H1</div>
<div class='t' style='left:1324px;top:54px;font-size:10.5px;color:#444'>H4</div>
<div class='t' style='left:1353px;top:54px;font-size:10.5px;color:#444'>D1</div>
<div class='t' style='left:1381px;top:54px;font-size:10.5px;color:#444'>W1</div>
<div class='t' style='left:1407px;top:54px;font-size:10.5px;color:#444'>MN</div>
<svg class='a' style='left:1545px;top:49px' width='16' height='16' viewBox='0 0 16 16' ><circle cx='9.5' cy='6' r='4.3' fill='#fff' stroke='#2b73d6' stroke-width='1.8'/><path d='M6.5 9l-5 5' stroke='#2b73d6' stroke-width='2.4'/></svg>
<svg class='a' style='left:1572px;top:49px' width='24' height='17' viewBox='0 0 24 17' ><ellipse cx='15' cy='6' rx='8' ry='5' fill='#fff' stroke='#9aa'/><ellipse cx='8' cy='10' rx='7' ry='4.5' fill='#fff' stroke='#9aa'/><path d='M4 13l-2 3 5-2' fill='#fff' stroke='#9aa'/></svg>
<svg class='a' style='left:1479px;top:9px' width='12' height='2' viewBox='0 0 12 2' ><path d='M0 1h11' stroke='#333'/></svg>
<svg class='a' style='left:1523px;top:4px' width='12' height='12' viewBox='0 0 12 12' ><rect x='.5' y='2.5' width='8' height='8' fill='none' stroke='#333'/><path d='M2.5 2.5v-2h8v8h-2' fill='none' stroke='#333'/></svg>
<svg class='a' style='left:1569px;top:5px' width='12' height='12' viewBox='0 0 12 12' ><path d='M.5 .5l11 11M11.5 .5l-11 11' stroke='#333' stroke-width='1.1'/></svg>
<div class='a' style='left:1543px;top:24px;width:17px;height:18px;background:#e2e2e2'></div>
<div class='a' style='left:1562px;top:24px;width:17px;height:18px;background:#e2e2e2'></div>
<div class='a' style='left:1581px;top:24px;width:17px;height:18px;background:#e2e2e2'></div>
<svg class='a' style='left:1547px;top:34px' width='9' height='3' viewBox='0 0 9 3' ><path d='M1 1.5h6' stroke='#555' stroke-width='1.6'/></svg>
<svg class='a' style='left:1566px;top:28px' width='10' height='9' viewBox='0 0 10 9' ><rect x='.5' y='3.5' width='6' height='5' fill='none' stroke='#555'/><path d='M3 1.5h6v5' fill='none' stroke='#555' stroke-width='1.4'/></svg>
<svg class='a' style='left:1585px;top:29px' width='9' height='9' viewBox='0 0 9 9' ><path d='M1 1l7 7M8 1L1 8' stroke='#555' stroke-width='1.6'/></svg>
<svg class='a' style='left:2px;top:3px' width='17' height='17' viewBox='0 0 17 17' ><circle cx='8.5' cy='8.5' r='8' fill='#e65c2a'/><path d='M3 3l11 11M14 3L3 14' stroke='#f3e3c8' stroke-width='2'/><circle cx='8.5' cy='5' r='3' fill='#f2c26a' opacity='.8'/></svg>
<svg class='a' style='left:5px;top:25px' width='15' height='15' viewBox='0 0 15 15' ><rect x='.5' y='.5' width='9' height='8' fill='#eaf3fc' stroke='#3b7bd6' stroke-dasharray='1 .6'/><rect x='4.5' y='5.5' width='10' height='9' fill='#eaf3fc' stroke='#3b7bd6' stroke-dasharray='1 .6'/><path d='M6 11l1.5-2 1.5 3 1.5-3 1.5 2' stroke='#3b7bd6' fill='none' stroke-width='.8'/></svg>
</body></html>
